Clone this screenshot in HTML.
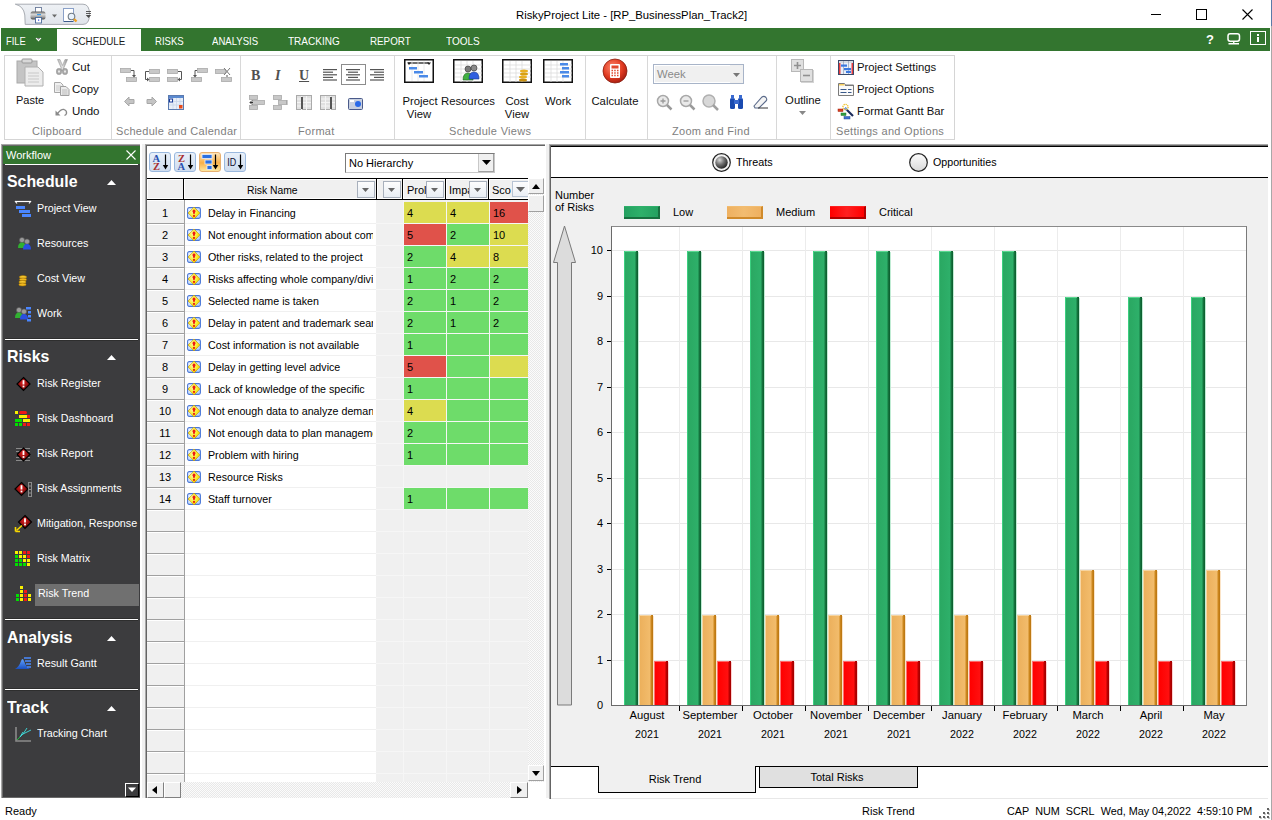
<!DOCTYPE html><html><head><meta charset="utf-8"><style>
html,body{margin:0;padding:0;}
body{width:1272px;height:820px;overflow:hidden;position:relative;background:#fff;font-family:"Liberation Sans",sans-serif;}
.t{position:absolute;white-space:nowrap;}
.b{position:absolute;box-sizing:border-box;}
svg.b{overflow:visible}
</style></head><body>
<svg class="b" style="left:14px;top:3px" width="80" height="24" viewBox="0 0 80 24"><defs><linearGradient id="qa" x1="0" y1="0" x2="0" y2="1"><stop offset="0" stop-color="#eef1f5"/><stop offset="1" stop-color="#e0e4ea"/></linearGradient><linearGradient id="pr" x1="0" y1="0" x2="0" y2="1"><stop offset="0" stop-color="#5a5a5a"/><stop offset="0.35" stop-color="#d8d8d8"/><stop offset="0.7" stop-color="#a0a0a0"/><stop offset="1" stop-color="#4a4a4a"/></linearGradient></defs><path d="M1.3 1.2 H69 Q75.5 1.2 75.5 11.3 Q75.5 21.4 69 21.4 H11.2 L10.8 12 Q9.5 3 1.3 1.2 Z" fill="url(#qa)" stroke="#a8acb2" stroke-width="1"/><rect x="21.5" y="4.5" width="6" height="5" fill="#fff" stroke="#6a7a9a" stroke-width="0.9"/><rect x="16.5" y="8.5" width="15" height="8" rx="2" fill="url(#pr)"/><rect x="23" y="11" width="4" height="1.2" fill="#3a9ae8"/><rect x="21.5" y="14.5" width="6" height="5.5" fill="#fff" stroke="#4a6a9a" stroke-width="0.9"/><rect x="24" y="16.5" width="1.2" height="1.2" fill="#2a4ae0"/><path d="M38 11.5h5l-2.5 3z" fill="#6a6a6a"/><rect x="49.5" y="5.5" width="10" height="13" fill="#fff" stroke="#8aa0c8" stroke-width="1"/><path d="M50 18.5h9" stroke="#3a5a8a" stroke-width="1"/><circle cx="57.5" cy="13.5" r="3.3" fill="#e8f2fc" stroke="#707a84" stroke-width="1.1"/><path d="M60 16l2.5 2.5" stroke="#f0a020" stroke-width="2.4"/><path d="M72 8.5h5M72 10.5h5" stroke="#4a4a4a" stroke-width="0.9"/><path d="M71.8 12h5.4l-2.7 3z" fill="#4a4a4a"/></svg>
<div class="t " style="left:516px;top:10px;font-size:11.3px;line-height:11.3px;color:#000;">RiskyProject Lite - [RP_BusinessPlan_Track2]</div>
<div class="b" style="left:1151px;top:14px;width:10px;height:1px;background:#000"></div>
<div class="b" style="left:1196px;top:9px;width:11px;height:11px;border:1px solid #000"></div>
<svg class="b" style="left:1242px;top:9px" width="11" height="11" viewBox="0 0 11 11"><path d="M0.5 0.5 L10.5 10.5 M10.5 0.5 L0.5 10.5" stroke="#000" stroke-width="1.1"/></svg>
<div class="b" style="left:1px;top:28px;width:1269px;height:23px;background:#33752f"></div>
<div class="t " style="left:6px;top:36px;font-size:11px;line-height:11px;color:#fff;transform:scaleX(0.85);transform-origin:0 0;">FILE</div>
<svg class="b" style="left:35px;top:37px" width="7" height="5" viewBox="0 0 7 5"><path d="M1 1 H6 L3.5 3.5Z" fill="#808080"/><path d="M1 1 L3.5 3.7 L6 1" fill="none" stroke="#fff" stroke-width="1.1"/></svg>
<div class="b" style="left:57px;top:29px;width:84px;height:22px;background:#fff"></div>
<div class="t " style="left:72px;top:36px;font-size:11px;line-height:11px;color:#1a1a1a;transform:scaleX(0.89);transform-origin:0 0;">SCHEDULE</div>
<div class="t " style="left:155px;top:36px;font-size:11px;line-height:11px;color:#fff;transform:scaleX(0.87);transform-origin:0 0;">RISKS</div>
<div class="t " style="left:212px;top:36px;font-size:11px;line-height:11px;color:#fff;transform:scaleX(0.87);transform-origin:0 0;">ANALYSIS</div>
<div class="t " style="left:288px;top:36px;font-size:11px;line-height:11px;color:#fff;transform:scaleX(0.91);transform-origin:0 0;">TRACKING</div>
<div class="t " style="left:370px;top:36px;font-size:11px;line-height:11px;color:#fff;transform:scaleX(0.89);transform-origin:0 0;">REPORT</div>
<div class="t " style="left:446px;top:36px;font-size:11px;line-height:11px;color:#fff;transform:scaleX(0.91);transform-origin:0 0;">TOOLS</div>
<div class="t " style="left:1206px;top:33px;font-size:13px;line-height:13px;color:#fff;font-weight:bold;">?</div>
<svg class="b" style="left:1227px;top:33px" width="14" height="12" viewBox="0 0 14 12"><rect x="1" y="0.8" width="11.5" height="7.5" rx="2.2" fill="none" stroke="#fff" stroke-width="1.5"/><path d="M6.75 8.5v2M1.5 10.8h10.5" stroke="#fff" stroke-width="1.4"/></svg>
<div class="b" style="left:1250px;top:31px;width:16px;height:14px;border:1.5px solid #fff"></div>
<div class="b" style="left:1257px;top:34px;width:2px;height:2px;background:#fff"></div>
<div class="b" style="left:1257px;top:37px;width:2px;height:5px;background:#fff"></div>
<div class="b" style="left:4px;top:55px;width:951px;height:85px;border:1px solid #d5d5d5;background:#fff"></div>
<div class="b" style="left:111px;top:56px;width:1px;height:83px;background:#d8d8d8"></div>
<div class="b" style="left:240px;top:56px;width:1px;height:83px;background:#d8d8d8"></div>
<div class="b" style="left:394px;top:56px;width:1px;height:83px;background:#d8d8d8"></div>
<div class="b" style="left:585px;top:56px;width:1px;height:83px;background:#d8d8d8"></div>
<div class="b" style="left:647px;top:56px;width:1px;height:83px;background:#d8d8d8"></div>
<div class="b" style="left:776px;top:56px;width:1px;height:83px;background:#d8d8d8"></div>
<div class="b" style="left:830px;top:56px;width:1px;height:83px;background:#d8d8d8"></div>
<div class="t " style="left:32px;top:126px;font-size:11px;line-height:11px;color:#808080;letter-spacing:0.3px;">Clipboard</div>
<div class="t " style="left:116px;top:126px;font-size:11px;line-height:11px;color:#808080;letter-spacing:0.3px;">Schedule and Calendar</div>
<div class="t " style="left:298px;top:126px;font-size:11px;line-height:11px;color:#808080;letter-spacing:0.3px;">Format</div>
<div class="t " style="left:449px;top:126px;font-size:11px;line-height:11px;color:#808080;letter-spacing:0.3px;">Schedule Views</div>
<div class="t " style="left:672px;top:126px;font-size:11px;line-height:11px;color:#808080;letter-spacing:0.3px;">Zoom and Find</div>
<div class="t " style="left:836px;top:126px;font-size:11px;line-height:11px;color:#808080;letter-spacing:0.3px;">Settings and Options</div>
<svg class="b" style="left:16px;top:58px" width="28" height="30" viewBox="0 0 28 30"><rect x="1" y="3" width="20" height="22" fill="#c4c4c4" stroke="#aaa"/><rect x="6" y="1" width="10" height="4" rx="1" fill="#d8d8d8" stroke="#999"/><path d="M9 9 H22 L27 14 V28 H9Z" fill="#ececec" stroke="#b0b0b0"/><path d="M12 15h11M12 18h11M12 21h11M12 24h11" stroke="#c8c8c8"/></svg>
<div class="t " style="left:16px;top:95px;font-size:11px;line-height:11px;color:#111;">Paste</div>
<svg class="b" style="left:56px;top:59px" width="12" height="16" viewBox="0 0 12 16"><defs><linearGradient id="sc" x1="0" y1="0" x2="1" y2="0"><stop offset="0" stop-color="#b8b8b8"/><stop offset="0.5" stop-color="#e0e0e0"/><stop offset="1" stop-color="#8a8a8a"/></linearGradient></defs><path d="M1.5 0.5h2.5l2.5 6l2.5-6h2.5l-3.5 8v3h-3v-3z" fill="url(#sc)" stroke="#9a9a9a" stroke-width="0.6"/><rect x="0.5" y="9.5" width="5" height="6" rx="2" fill="#a8a8a8" stroke="#909090" stroke-width="0.6"/><rect x="6.5" y="9.5" width="5" height="6" rx="2" fill="#a8a8a8" stroke="#909090" stroke-width="0.6"/><rect x="2" y="11.5" width="2" height="2" fill="#e8e8e8"/><rect x="8" y="11.5" width="2" height="2" fill="#e8e8e8"/></svg>
<div class="t " style="left:72px;top:62px;font-size:11.5px;line-height:11.5px;color:#111;">Cut</div>
<svg class="b" style="left:54px;top:82px" width="16" height="14" viewBox="0 0 16 14"><path d="M0.5 0.5h6l2.5 2.5v7.5h-8.5z" fill="#f0f0f0" stroke="#a8a8a8"/><path d="M2 4h5M2 6h5M2 8h4" stroke="#c0c0c0" stroke-width="0.8"/><path d="M6.5 4.5h5.5l3 3v6h-8.5z" fill="#ececec" stroke="#a0a0a0"/><path d="M8 8h5.5M8 10h5.5M8 12h5.5" stroke="#b0b0b0" stroke-width="0.8"/></svg>
<div class="t " style="left:72px;top:84px;font-size:11.5px;line-height:11.5px;color:#111;">Copy</div>
<svg class="b" style="left:55px;top:106px" width="13" height="10" viewBox="0 0 13 10"><path d="M0.5 9.5V4.5L5.5 9.5Z" fill="#8a8a8a"/><path d="M2.5 7.5Q6 3 9 3.5Q12 4.5 11.5 7.5Q11 9 9.5 9.5" fill="none" stroke="#8a8a8a" stroke-width="1.3"/></svg>
<div class="t " style="left:72px;top:106px;font-size:11.5px;line-height:11.5px;color:#111;">Undo</div>
<svg class="b" style="left:120px;top:68px" width="17" height="14" viewBox="0 0 17 14"><rect x="0.5" y="0.5" width="10" height="4" fill="#c8c8c8" stroke="#aaa" stroke-width="0.8"/><rect x="6.5" y="9.5" width="10" height="4" fill="#c8c8c8" stroke="#aaa" stroke-width="0.8"/><path d="M11 2.5h3v6" fill="none" stroke="#555" stroke-width="1"/><path d="M12 7h4l-2 2.5z" fill="#555"/></svg>
<svg class="b" style="left:144px;top:68px" width="17" height="14" viewBox="0 0 17 14"><rect x="5.5" y="1.5" width="10" height="4" fill="#c8c8c8" stroke="#aaa" stroke-width="0.8"/><rect x="5.5" y="9.5" width="10" height="4" fill="#c8c8c8" stroke="#aaa" stroke-width="0.8"/><path d="M5 3.5H1.5v8h3" fill="none" stroke="#555"/><path d="M3 9.5l2.5 2l-2.5 2z" fill="#555"/></svg>
<svg class="b" style="left:167px;top:68px" width="17" height="14" viewBox="0 0 17 14"><rect x="0.5" y="1.5" width="10" height="4" fill="#c8c8c8" stroke="#aaa" stroke-width="0.8"/><rect x="0.5" y="9.5" width="10" height="4" fill="#c8c8c8" stroke="#aaa" stroke-width="0.8"/><path d="M11 3.5h3.5v8H12" fill="none" stroke="#555"/><path d="M13 9.5l-2.5 2l2.5 2z" fill="#555"/></svg>
<svg class="b" style="left:191px;top:68px" width="17" height="14" viewBox="0 0 17 14"><rect x="6.5" y="0.5" width="10" height="4" fill="#c8c8c8" stroke="#aaa" stroke-width="0.8"/><rect x="0.5" y="9.5" width="10" height="4" fill="#c8c8c8" stroke="#aaa" stroke-width="0.8"/><path d="M6 2.5H4v6" fill="none" stroke="#555"/><path d="M2 7h4l-2 2.5z" fill="#555"/></svg>
<svg class="b" style="left:215px;top:68px" width="17" height="14" viewBox="0 0 17 14"><rect x="0.5" y="1.5" width="10" height="4" fill="#c8c8c8" stroke="#aaa" stroke-width="0.8"/><rect x="6.5" y="9.5" width="10" height="4" fill="#c8c8c8" stroke="#aaa" stroke-width="0.8"/><path d="M9 0l6 7M15 0l-6 7" stroke="#777"/><path d="M12 7v2" stroke="#555"/></svg>
<svg class="b" style="left:124px;top:96px" width="11" height="11" viewBox="0 0 11 11"><path d="M0.5 5.5 L5 1 V3.5 H10 V7.5 H5 V10z" fill="#c4c4c4" stroke="#a8a8a8"/></svg>
<svg class="b" style="left:146px;top:96px" width="11" height="11" viewBox="0 0 11 11"><path d="M10.5 5.5 L6 1 V3.5 H1 V7.5 H6 V10z" fill="#c4c4c4" stroke="#a8a8a8"/></svg>
<svg class="b" style="left:168px;top:95px" width="16" height="15" viewBox="0 0 16 15"><rect x="0.5" y="0.5" width="15" height="14" fill="#e8eef8" stroke="#5a7ab0"/><rect x="1" y="1" width="14" height="2" fill="#5a8ad0"/><path d="M1 6.5h14M1 10h14M5 3v11M8.5 3v11M12 3v11" stroke="#c8d4e8" stroke-width="0.8"/><rect x="1.5" y="4" width="3" height="3" fill="#fff" stroke="#1a3a9a"/><rect x="11" y="10" width="3.5" height="3.5" fill="#e84a1a"/></svg>
<div class="t " style="left:251px;top:68px;font-size:14px;line-height:14px;color:#505050;"><span style="font-family:Liberation Serif;font-weight:bold">B</span></div>
<div class="t " style="left:275px;top:68px;font-size:14px;line-height:14px;color:#505050;"><span style="font-family:Liberation Serif;font-style:italic;font-weight:bold">I</span></div>
<div class="t " style="left:299px;top:68px;font-size:14px;line-height:14px;color:#505050;"><span style="font-family:Liberation Serif;font-weight:bold;text-decoration:underline">U</span></div>
<svg class="b" style="left:323px;top:69px" width="14" height="12" viewBox="0 0 14 12"><rect x="0" y="0.0" width="14" height="1.2" fill="#555"/><rect x="0" y="2.6" width="10" height="1.2" fill="#555"/><rect x="0" y="5.2" width="14" height="1.2" fill="#555"/><rect x="0" y="7.8" width="10" height="1.2" fill="#555"/><rect x="0" y="10.4" width="14" height="1.2" fill="#555"/></svg>
<div class="b" style="left:341px;top:64px;width:25px;height:21px;border:1px solid #8c8c8c"></div>
<svg class="b" style="left:346px;top:69px" width="14" height="12" viewBox="0 0 14 12"><rect x="0.0" y="0.0" width="14" height="1.2" fill="#555"/><rect x="2.0" y="2.6" width="10" height="1.2" fill="#555"/><rect x="0.0" y="5.2" width="14" height="1.2" fill="#555"/><rect x="2.0" y="7.8" width="10" height="1.2" fill="#555"/><rect x="0.0" y="10.4" width="14" height="1.2" fill="#555"/></svg>
<svg class="b" style="left:370px;top:69px" width="14" height="12" viewBox="0 0 14 12"><rect x="0" y="0.0" width="14" height="1.2" fill="#555"/><rect x="4" y="2.6" width="10" height="1.2" fill="#555"/><rect x="0" y="5.2" width="14" height="1.2" fill="#555"/><rect x="4" y="7.8" width="10" height="1.2" fill="#555"/><rect x="0" y="10.4" width="14" height="1.2" fill="#555"/></svg>
<svg class="b" style="left:249px;top:95px" width="16" height="15" viewBox="0 0 16 15"><rect x="0.5" y="0.5" width="8" height="4" fill="#c8c8c8" stroke="#aaa" stroke-width="0.8"/><rect x="3.5" y="5.5" width="12" height="4" fill="#c8c8c8" stroke="#aaa" stroke-width="0.8"/><rect x="0.5" y="10.5" width="8" height="4" fill="#c8c8c8" stroke="#aaa" stroke-width="0.8"/><path d="M1 7.5h3M1 7.5l2-2M1 7.5l2 2" stroke="#333"/></svg>
<svg class="b" style="left:273px;top:95px" width="16" height="15" viewBox="0 0 16 15"><rect x="0.5" y="0.5" width="8" height="4" fill="#c8c8c8" stroke="#aaa" stroke-width="0.8"/><rect x="5.5" y="5.5" width="8" height="4" fill="#c8c8c8" stroke="#aaa" stroke-width="0.8"/><rect x="0.5" y="10.5" width="8" height="4" fill="#c8c8c8" stroke="#aaa" stroke-width="0.8"/><path d="M14 5v5" stroke="#999"/></svg>
<svg class="b" style="left:296px;top:95px" width="17" height="15" viewBox="0 0 17 15"><rect x="0.5" y="0.5" width="15" height="14" fill="#e0e0e0" stroke="#aaa"/><path d="M1 4h14M1 7.5h14M1 11h14M5.5 1v14M10.5 1v14" stroke="#f4f4f4"/><rect x="5" y="2" width="2" height="12" fill="#555"/></svg>
<svg class="b" style="left:320px;top:95px" width="17" height="15" viewBox="0 0 17 15"><rect x="0.5" y="0.5" width="15" height="14" fill="#e0e0e0" stroke="#aaa"/><path d="M1 4h14M1 7.5h14M1 11h14M5.5 1v14M10.5 1v14" stroke="#f4f4f4"/><rect x="10" y="2" width="2" height="12" fill="#555"/></svg>
<svg class="b" style="left:348px;top:97px" width="15" height="13" viewBox="0 0 15 13"><rect x="0.5" y="1.5" width="14" height="11" rx="1" fill="#c8d0e0" stroke="#4a5a8a"/><rect x="2" y="3" width="4" height="2" fill="#fff"/><circle cx="10" cy="7" r="3" fill="#2a6ae8"/></svg>
<svg class="b" style="left:404px;top:59px" width="30" height="24" viewBox="0 0 30 24"><rect x="0.75" y="0.75" width="28.5" height="22.5" fill="#fff" stroke="#111" stroke-width="1.5"/><path d="M4 4h21" stroke="#222" stroke-width="1.3"/><path d="M3 3.5l2 2.5l2-2.5zM23 3.5l2 2.5l2-2.5z" fill="#222"/><path d="M8 2v20M14 2v20M20 2v20" stroke="#e4e4e4" stroke-width="0.8"/><rect x="5" y="8" width="8" height="2.5" fill="#4a8ae8"/><rect x="10" y="12" width="9" height="2.5" fill="#4a8ae8"/><rect x="15" y="16" width="9" height="2.5" fill="#4a8ae8"/></svg>
<svg class="b" style="left:453px;top:59px" width="30" height="24" viewBox="0 0 30 24"><rect x="0.75" y="0.75" width="28.5" height="22.5" fill="#fff" stroke="#111" stroke-width="1.5"/><path d="M2 6h27M2 10h27M2 14h27M2 18h27M8 2v21M14 2v21M20 2v21" stroke="#dcdcdc" stroke-width="0.8"/><circle cx="15" cy="10" r="3" fill="#7a7a7a" stroke="#333" stroke-width="0.6"/><circle cx="21" cy="9" r="3" fill="#8a8a8a" stroke="#333" stroke-width="0.6"/><path d="M10 21 Q10 14 15 14 Q20 14 20 21Z" fill="#40b040" stroke="#206020" stroke-width="0.6"/><path d="M16 20 Q16 13 21 13 Q26 13 26 20Z" fill="#3060e0" stroke="#1a3a90" stroke-width="0.6"/></svg>
<svg class="b" style="left:502px;top:59px" width="30" height="24" viewBox="0 0 30 24"><rect x="0.75" y="0.75" width="28.5" height="22.5" fill="#fff" stroke="#111" stroke-width="1.5"/><path d="M2 6h27M2 10h27M2 14h27M2 18h27M8 2v21M14 2v21M20 2v21" stroke="#dcdcdc" stroke-width="0.8"/><ellipse cx="22" cy="12" rx="4" ry="1.5" fill="#e8b020"/><ellipse cx="22" cy="15" rx="4" ry="1.5" fill="#d8a010"/><ellipse cx="21" cy="18" rx="4" ry="1.5" fill="#e8b020"/><ellipse cx="21" cy="21" rx="4" ry="1.5" fill="#c89010"/></svg>
<svg class="b" style="left:543px;top:59px" width="30" height="24" viewBox="0 0 30 24"><rect x="0.75" y="0.75" width="28.5" height="22.5" fill="#fff" stroke="#111" stroke-width="1.5"/><path d="M2 6h27M2 10h27M2 14h27M2 18h27M8 2v21M14 2v21M20 2v21" stroke="#dcdcdc" stroke-width="0.8"/><rect x="17" y="4" width="8" height="2.5" fill="#4a8ae8"/><rect x="19" y="8" width="7" height="2.5" fill="#4a8ae8"/><rect x="17" y="12" width="9" height="2.5" fill="#4a8ae8"/><rect x="19" y="16" width="7" height="2.5" fill="#4a8ae8"/></svg>
<div class="t" style="left:270px;width:300px;text-align:center;top:96px;font-size:11.3px;line-height:11.3px;color:#111;">Project</div>
<div class="t" style="left:269px;width:300px;text-align:center;top:109px;font-size:11.3px;line-height:11.3px;color:#111;">View</div>
<div class="t" style="left:318px;width:300px;text-align:center;top:96px;font-size:11.3px;line-height:11.3px;color:#111;">Resources</div>
<div class="t" style="left:367px;width:300px;text-align:center;top:96px;font-size:11.3px;line-height:11.3px;color:#111;">Cost</div>
<div class="t" style="left:367px;width:300px;text-align:center;top:109px;font-size:11.3px;line-height:11.3px;color:#111;">View</div>
<div class="t" style="left:408px;width:300px;text-align:center;top:96px;font-size:11.3px;line-height:11.3px;color:#111;">Work</div>
<svg class="b" style="left:602px;top:58px" width="26" height="26" viewBox="0 0 26 26"><defs><radialGradient id="cg" cx="0.4" cy="0.35" r="0.7"><stop offset="0" stop-color="#ff8a70"/><stop offset="0.6" stop-color="#e03a20"/><stop offset="1" stop-color="#a01a10"/></radialGradient></defs><circle cx="13" cy="13" r="12" fill="url(#cg)" stroke="#8a2010" stroke-width="0.8"/><rect x="8" y="6" width="10" height="14" rx="1" fill="#fff"/><rect x="9.5" y="7.5" width="7" height="3" fill="#e04a30"/><path d="M9.5 12.5h1.5M12.2 12.5h1.5M15 12.5h1.5M9.5 15h1.5M12.2 15h1.5M15 15h1.5M9.5 17.5h1.5M12.2 17.5h1.5M15 17.5h1.5" stroke="#e04a30" stroke-width="1.5"/></svg>
<div class="t" style="left:465px;width:300px;text-align:center;top:96px;font-size:11.3px;line-height:11.3px;color:#111;">Calculate</div>
<div class="b" style="left:653px;top:64px;width:91px;height:20px;border:1px solid #a8b4c8;background:#fff"></div>
<div class="b" style="left:655px;top:66px;width:75px;height:16px;background:#f0f0f0"></div>
<div class="b" style="left:730px;top:65px;width:13px;height:18px;background:#f0f0f0"></div>
<div class="t " style="left:657px;top:69px;font-size:11.3px;line-height:11.3px;color:#8a8a8a;">Week</div>
<svg class="b" style="left:733px;top:73px" width="7" height="4" viewBox="0 0 7 4"><path d="M0 0h7l-3.5 4z" fill="#777"/></svg>
<svg class="b" style="left:656px;top:94px" width="17" height="16" viewBox="0 0 17 16"><circle cx="7" cy="7" r="5.5" fill="#eaeaea" stroke="#a8a8a8" stroke-width="1.5"/><path d="M11 11l4.5 4.5" stroke="#9a9a9a" stroke-width="2.5"/><path d="M4.5 7h5M7 4.5v5" stroke="#999" stroke-width="1.3"/></svg>
<svg class="b" style="left:679px;top:94px" width="17" height="16" viewBox="0 0 17 16"><circle cx="7" cy="7" r="5.5" fill="#eaeaea" stroke="#a8a8a8" stroke-width="1.5"/><path d="M11 11l4.5 4.5" stroke="#9a9a9a" stroke-width="2.5"/><path d="M4.5 7h5" stroke="#999" stroke-width="1.3"/></svg>
<svg class="b" style="left:702px;top:94px" width="18" height="16" viewBox="0 0 18 16"><circle cx="7" cy="7" r="6" fill="#d8d8d8" stroke="#b0b0b0" stroke-width="1.5"/><path d="M11 11l5 5" stroke="#a0a0a0" stroke-width="2.5"/></svg>
<svg class="b" style="left:728px;top:95px" width="17" height="15" viewBox="0 0 17 15"><rect x="2" y="3" width="5" height="11" rx="1.5" fill="#1a4ab0"/><rect x="10" y="3" width="5" height="11" rx="1.5" fill="#1a4ab0"/><rect x="6" y="5" width="5" height="4" fill="#3a6ad0"/><rect x="3" y="0" width="3" height="4" fill="#3a6ad0"/><rect x="11" y="0" width="3" height="4" fill="#3a6ad0"/></svg>
<svg class="b" style="left:752px;top:95px" width="17" height="15" viewBox="0 0 17 15"><path d="M2 11 L10 2 Q12 0.5 14 2.5 Q15.5 4.5 14 6 L7 13 H3 Z" fill="#f4f4f4" stroke="#5a6a8a" stroke-width="1.1"/><path d="M6 13h10" stroke="#333"/></svg>
<svg class="b" style="left:790px;top:58px" width="26" height="27" viewBox="0 0 26 27"><rect x="2" y="2" width="12" height="12" fill="#d0d0d0"/><rect x="1.5" y="1.5" width="12" height="12" fill="#e0e0e0" stroke="#b8b8b8"/><path d="M4 7.5h7M7.5 4v7" stroke="#909090" stroke-width="1.6"/><rect x="11" y="12" width="13" height="13" fill="#d4d4d4"/><rect x="10.5" y="11.5" width="12" height="12" fill="#e0e0e0" stroke="#b8b8b8"/><path d="M13 17.5h7" stroke="#909090" stroke-width="1.6"/></svg>
<div class="t" style="left:653px;width:300px;text-align:center;top:95px;font-size:11.3px;line-height:11.3px;color:#111;">Outline</div>
<svg class="b" style="left:799px;top:111px" width="7" height="4" viewBox="0 0 7 4"><path d="M0 0h7l-3.5 4z" fill="#888"/></svg>
<svg class="b" style="left:838px;top:60px" width="16" height="15" viewBox="0 0 16 15"><rect x="0.5" y="0.5" width="15" height="14" fill="#e8f0fa" stroke="#3a4a6a"/><rect x="1" y="1" width="14" height="2" fill="#d8dce4"/><path d="M5.5 1v13M10.5 1v13" stroke="#9aa8c0" stroke-width="0.8"/><rect x="1.2" y="3" width="1.2" height="11" fill="#e81010"/><rect x="13.6" y="3" width="1.2" height="11" fill="#e81010"/><rect x="3" y="4.5" width="6" height="2.2" fill="#3a78e0"/><rect x="6" y="8" width="7" height="2.2" fill="#3a78e0"/><rect x="8" y="11" width="5" height="2" fill="#3a78e0"/></svg>
<div class="t " style="left:857px;top:62px;font-size:11.3px;line-height:11.3px;color:#111;">Project Settings</div>
<svg class="b" style="left:838px;top:82px" width="16" height="14" viewBox="0 0 16 14"><path d="M0.5 1.5h6l1 1.5h8v10.5h-15z" fill="#fafafa" stroke="#7a7a7a"/><rect x="1" y="2" width="5.5" height="1.5" fill="#f8d060"/><path d="M7 3.5h8.5" stroke="#7a7a7a"/><path d="M2.5 7.5h6M10 7.5h3.5M2.5 10.5h6M10 10.5h3.5" stroke="#3a5a8a" stroke-width="1"/></svg>
<div class="t " style="left:857px;top:84px;font-size:11.3px;line-height:11.3px;color:#111;">Project Options</div>
<svg class="b" style="left:837px;top:103px" width="18" height="17" viewBox="0 0 18 17"><rect x="1" y="6" width="5" height="2.5" fill="#d84020" stroke="#a02010" stroke-width="0.5"/><rect x="4" y="10" width="5" height="2.5" fill="#30a040" stroke="#207030" stroke-width="0.5"/><rect x="7" y="13.5" width="6" height="2.5" fill="#4070d0" stroke="#2050a0" stroke-width="0.5"/><path d="M8 5L16 13" stroke="#1a2a5a" stroke-width="2.2"/><path d="M8 5L10 7" stroke="#6aa0ff" stroke-width="2"/><circle cx="8.5" cy="4" r="2.6" fill="none" stroke="#f0c020" stroke-width="1.3" stroke-dasharray="1.2 0.8"/></svg>
<div class="t " style="left:857px;top:106px;font-size:11.3px;line-height:11.3px;color:#111;">Format Gantt Bar</div>
<div class="b" style="left:0px;top:140px;width:1272px;height:658px;background:#fff"></div>
<div class="b" style="left:142px;top:144px;width:3px;height:654px;background:#f0f0f0"></div>
<div class="b" style="left:546px;top:144px;width:3px;height:654px;background:#f0f0f0"></div>
<div class="b" style="left:1px;top:144px;width:139px;height:654px;background:#a8a8a8"></div>
<div class="b" style="left:2px;top:145px;width:138px;height:653px;background:#6a6a6a"></div>
<div class="b" style="left:3px;top:146px;width:137px;height:651px;background:#3c3c3e"></div>
<div class="b" style="left:3px;top:146px;width:137px;height:18px;background:#33752f"></div>
<div class="t " style="left:6px;top:150px;font-size:11px;line-height:11px;color:#fff;">Workflow</div>
<svg class="b" style="left:126px;top:150px" width="10" height="10" viewBox="0 0 10 10"><path d="M0.5 0.5L9.5 9.5M9.5 0.5L0.5 9.5" stroke="#fff" stroke-width="1.1"/></svg>
<div class="b" style="left:5px;top:164px;width:133px;height:1px;background:#fff"></div>
<div class="t " style="left:7px;top:173px;font-size:16.2px;line-height:16.2px;color:#fff;font-weight:bold;transform:scaleX(0.98);transform-origin:0 0;">Schedule</div>
<svg class="b" style="left:107px;top:180px" width="9" height="5" viewBox="0 0 9 5"><path d="M0 5 L4.5 0 L9 5Z" fill="#fff"/></svg>
<div class="t " style="left:37px;top:203px;font-size:11px;line-height:11px;color:#fff;transform:scaleX(0.975);transform-origin:0 0;">Project View</div>
<svg class="b" style="left:14px;top:200px" width="18" height="17" viewBox="0 0 18 17"><path d="M1.5 1.5h15" stroke="#fff" stroke-width="1.2"/><path d="M1 1l2 2.5M17 1l-2 2.5" stroke="#fff" stroke-width="1.2"/><rect x="2" y="6" width="9" height="3" fill="#4a86ff"/><rect x="5" y="10" width="11" height="3" fill="#4a86ff"/><rect x="8" y="14" width="9" height="3" fill="#4a86ff"/></svg>
<div class="t " style="left:37px;top:238px;font-size:11px;line-height:11px;color:#fff;transform:scaleX(0.975);transform-origin:0 0;">Resources</div>
<svg class="b" style="left:14px;top:235px" width="18" height="17" viewBox="0 0 18 17"><circle cx="8" cy="5" r="2.6" fill="#9a9a9a" stroke="#555" stroke-width="0.6"/><path d="M4 13 Q4 7.5 8 7.5 Q12 7.5 12 13Z" fill="#30b030"/><circle cx="13" cy="6.5" r="2.6" fill="#9a9a9a" stroke="#555" stroke-width="0.6"/><path d="M9 14.5 Q9 9.0 13 9.0 Q17 9.0 17 14.5Z" fill="#2a50e0"/></svg>
<div class="t " style="left:37px;top:273px;font-size:11px;line-height:11px;color:#fff;transform:scaleX(0.975);transform-origin:0 0;">Cost View</div>
<svg class="b" style="left:14px;top:270px" width="18" height="17" viewBox="0 0 18 17"><ellipse cx="9" cy="7" rx="3.6" ry="1.5" fill="#f8c830" stroke="#a07000" stroke-width="0.6"/><ellipse cx="9" cy="9.5" rx="3.6" ry="1.5" fill="#f0b820" stroke="#a07000" stroke-width="0.6"/><ellipse cx="8.5" cy="12" rx="3.6" ry="1.5" fill="#f8c830" stroke="#a07000" stroke-width="0.6"/><ellipse cx="8.5" cy="14.5" rx="3.6" ry="1.5" fill="#f0b820" stroke="#a07000" stroke-width="0.6"/></svg>
<div class="t " style="left:37px;top:308px;font-size:11px;line-height:11px;color:#fff;transform:scaleX(0.975);transform-origin:0 0;">Work</div>
<svg class="b" style="left:14px;top:305px" width="18" height="17" viewBox="0 0 18 17"><circle cx="5" cy="5" r="2.6" fill="#9a9a9a" stroke="#555" stroke-width="0.6"/><path d="M1 13 Q1 7.5 5 7.5 Q9 7.5 9 13Z" fill="#30b030"/><circle cx="10" cy="6.5" r="2.6" fill="#9a9a9a" stroke="#555" stroke-width="0.6"/><path d="M6 14.5 Q6 9.0 10 9.0 Q14 9.0 14 14.5Z" fill="#2a50e0"/><rect x="12" y="2" width="5" height="2.5" fill="#4a86ff"/><rect x="14" y="6" width="3" height="2.5" fill="#4a86ff"/><rect x="14" y="10" width="3" height="2.5" fill="#4a86ff"/><rect x="13" y="14" width="4" height="2.5" fill="#4a86ff"/></svg>
<div class="b" style="left:5px;top:338px;width:133px;height:3px;background:#2e2e2e"></div>
<div class="b" style="left:5px;top:339px;width:133px;height:1px;background:#fff"></div>
<div class="t " style="left:7px;top:348px;font-size:16.2px;line-height:16.2px;color:#fff;font-weight:bold;transform:scaleX(0.98);transform-origin:0 0;">Risks</div>
<svg class="b" style="left:107px;top:355px" width="9" height="5" viewBox="0 0 9 5"><path d="M0 5 L4.5 0 L9 5Z" fill="#fff"/></svg>
<div class="t " style="left:37px;top:378px;font-size:11px;line-height:11px;color:#fff;transform:scaleX(0.975);transform-origin:0 0;">Risk Register</div>
<svg class="b" style="left:14px;top:375px" width="18" height="17" viewBox="0 0 18 17"><defs><radialGradient id="dg" cx="0.45" cy="0.4" r="0.6"><stop offset="0" stop-color="#e02020"/><stop offset="1" stop-color="#600000"/></radialGradient></defs><path d="M9.5 2.5 L16.0 9 L9.5 15.5 L3.0 9Z" fill="url(#dg)" stroke="#000" stroke-width="1.2"/><path d="M9.5 5.2v4.3" stroke="#fff" stroke-width="1.8"/><rect x="8.6" y="10.6" width="1.8" height="1.8" fill="#fff"/></svg>
<div class="t " style="left:37px;top:413px;font-size:11px;line-height:11px;color:#fff;transform:scaleX(0.975);transform-origin:0 0;">Risk Dashboard</div>
<svg class="b" style="left:14px;top:410px" width="18" height="17" viewBox="0 0 18 17"><rect x="1" y="1" width="3" height="3" fill="#f8f000"/><rect x="5" y="1" width="8" height="3" rx="1.5" fill="#f01818"/><rect x="5" y="5" width="8" height="3" fill="#f8f000"/><rect x="13" y="5" width="3" height="3" fill="#f01818"/><rect x="1" y="9" width="7" height="3" fill="#00e000"/><rect x="9" y="9" width="7" height="3" fill="#f8f000"/><rect x="1" y="13" width="3" height="3" fill="#00e000"/><rect x="5" y="13" width="3" height="3" fill="#00e000"/><rect x="9" y="13" width="3" height="3" fill="#f01818"/><rect x="13" y="13" width="3" height="3" fill="#f01818"/></svg>
<div class="t " style="left:37px;top:448px;font-size:11px;line-height:11px;color:#fff;transform:scaleX(0.975);transform-origin:0 0;">Risk Report</div>
<svg class="b" style="left:14px;top:445px" width="18" height="17" viewBox="0 0 18 17"><path d="M2 3.5h14M2 6.5h14M2 9.5h14M2 12.5h14M2 15.5h14" stroke="#8a8a8a" stroke-width="1"/><defs><radialGradient id="dg" cx="0.45" cy="0.4" r="0.6"><stop offset="0" stop-color="#e02020"/><stop offset="1" stop-color="#600000"/></radialGradient></defs><path d="M9.5 3.0 L16.0 9.5 L9.5 16.0 L3.0 9.5Z" fill="url(#dg)" stroke="#000" stroke-width="1.2"/><path d="M9.5 5.7v4.3" stroke="#fff" stroke-width="1.8"/><rect x="8.6" y="11.1" width="1.8" height="1.8" fill="#fff"/></svg>
<div class="t " style="left:37px;top:483px;font-size:11px;line-height:11px;color:#fff;transform:scaleX(0.975);transform-origin:0 0;">Risk Assignments</div>
<svg class="b" style="left:14px;top:480px" width="18" height="17" viewBox="0 0 18 17"><defs><radialGradient id="dg" cx="0.45" cy="0.4" r="0.6"><stop offset="0" stop-color="#e02020"/><stop offset="1" stop-color="#600000"/></radialGradient></defs><path d="M7.5 2.5 L14.0 9 L7.5 15.5 L1.0 9Z" fill="url(#dg)" stroke="#000" stroke-width="1.2"/><path d="M7.5 5.2v4.3" stroke="#fff" stroke-width="1.8"/><rect x="6.6" y="10.6" width="1.8" height="1.8" fill="#fff"/><rect x="14.5" y="2.5" width="3" height="14" fill="none" stroke="#8a8a8a"/><path d="M14.5 6h3M14.5 9.5h3M14.5 13h3" stroke="#8a8a8a"/></svg>
<div class="t " style="left:37px;top:518px;font-size:11px;line-height:11px;color:#fff;transform:scaleX(0.975);transform-origin:0 0;">Mitigation, Response</div>
<svg class="b" style="left:14px;top:515px" width="18" height="17" viewBox="0 0 18 17"><defs><radialGradient id="dg" cx="0.45" cy="0.4" r="0.6"><stop offset="0" stop-color="#e02020"/><stop offset="1" stop-color="#600000"/></radialGradient></defs><path d="M11 0.5 L17.5 7 L11 13.5 L4.5 7Z" fill="url(#dg)" stroke="#000" stroke-width="1.2"/><path d="M11 3.2v4.3" stroke="#fff" stroke-width="1.8"/><rect x="10.1" y="8.6" width="1.8" height="1.8" fill="#fff"/><path d="M2.5 15.5L8 10.5" stroke="#f8d800" stroke-width="1.6"/><path d="M1.5 16.5h4.5M1.5 16.5v-4.5" stroke="#f8d800" stroke-width="1.6"/></svg>
<div class="t " style="left:37px;top:553px;font-size:11px;line-height:11px;color:#fff;transform:scaleX(0.975);transform-origin:0 0;">Risk Matrix</div>
<svg class="b" style="left:14px;top:550px" width="18" height="17" viewBox="0 0 18 17"><rect x="1" y="1" width="3" height="3" fill="#f8f000"/><rect x="5" y="1" width="3" height="3" fill="#f8f000"/><rect x="9" y="1" width="3" height="3" fill="#f01818"/><rect x="13" y="1" width="3" height="3" fill="#f01818"/><rect x="1" y="5" width="3" height="3" fill="#00e000"/><rect x="5" y="5" width="3" height="3" fill="#f8f000"/><rect x="9" y="5" width="3" height="3" fill="#f8f000"/><rect x="13" y="5" width="3" height="3" fill="#f01818"/><rect x="1" y="9" width="3" height="3" fill="#00e000"/><rect x="5" y="9" width="3" height="3" fill="#00e000"/><rect x="9" y="9" width="3" height="3" fill="#f8f000"/><rect x="13" y="9" width="3" height="3" fill="#f8f000"/><rect x="1" y="13" width="3" height="3" fill="#00e000"/><rect x="5" y="13" width="3" height="3" fill="#00e000"/><rect x="9" y="13" width="3" height="3" fill="#00e000"/><rect x="13" y="13" width="3" height="3" fill="#f8f000"/></svg>
<div class="b" style="left:35px;top:584px;width:104px;height:22px;background:#707070"></div>
<div class="t " style="left:38px;top:588px;font-size:11px;line-height:11px;color:#fff;transform:scaleX(0.975);transform-origin:0 0;">Risk Trend</div>
<svg class="b" style="left:14px;top:585px" width="18" height="17" viewBox="0 0 18 17"><rect x="6" y="1" width="3" height="3" fill="#f8f000"/><rect x="6" y="5" width="3" height="3" fill="#f8f000"/><rect x="10" y="5" width="3" height="3" fill="#f01818"/><rect x="2" y="9" width="3" height="3" fill="#00e000"/><rect x="6" y="9" width="3" height="3" fill="#f8f000"/><rect x="10" y="9" width="3" height="3" fill="#f01818"/><rect x="14" y="9" width="3" height="3" fill="#f8f000"/><rect x="2" y="13" width="3" height="3" fill="#00e000"/><rect x="6" y="13" width="3" height="3" fill="#f8f000"/><rect x="10" y="13" width="3" height="3" fill="#f01818"/><rect x="14" y="13" width="3" height="3" fill="#f8f000"/></svg>
<div class="b" style="left:5px;top:618px;width:133px;height:3px;background:#2e2e2e"></div>
<div class="b" style="left:5px;top:619px;width:133px;height:1px;background:#fff"></div>
<div class="t " style="left:7px;top:629px;font-size:16.2px;line-height:16.2px;color:#fff;font-weight:bold;transform:scaleX(0.98);transform-origin:0 0;">Analysis</div>
<svg class="b" style="left:107px;top:636px" width="9" height="5" viewBox="0 0 9 5"><path d="M0 5 L4.5 0 L9 5Z" fill="#fff"/></svg>
<div class="t " style="left:37px;top:658px;font-size:11px;line-height:11px;color:#fff;transform:scaleX(0.975);transform-origin:0 0;">Result Gantt</div>
<svg class="b" style="left:14px;top:655px" width="18" height="17" viewBox="0 0 18 17"><defs><linearGradient id="gg" x1="0" y1="0" x2="0" y2="1"><stop offset="0" stop-color="#60a0ff"/><stop offset="1" stop-color="#1a50c0"/></linearGradient></defs><path d="M1 14 Q5 12 7 6 Q8.5 2 10 6 Q12 12 16 14Z" fill="url(#gg)"/><path d="M10 3h7M11 6h6M12 9h5M13 12h4" stroke="#4a8aff" stroke-width="1.5"/></svg>
<div class="b" style="left:5px;top:688px;width:133px;height:3px;background:#2e2e2e"></div>
<div class="b" style="left:5px;top:689px;width:133px;height:1px;background:#fff"></div>
<div class="t " style="left:7px;top:699px;font-size:16.2px;line-height:16.2px;color:#fff;font-weight:bold;transform:scaleX(0.98);transform-origin:0 0;">Track</div>
<svg class="b" style="left:107px;top:706px" width="9" height="5" viewBox="0 0 9 5"><path d="M0 5 L4.5 0 L9 5Z" fill="#fff"/></svg>
<div class="t " style="left:37px;top:728px;font-size:11px;line-height:11px;color:#fff;transform:scaleX(0.975);transform-origin:0 0;">Tracking Chart</div>
<svg class="b" style="left:14px;top:725px" width="18" height="17" viewBox="0 0 18 17"><path d="M2 2v14h15" fill="none" stroke="#8a8a8a" stroke-width="1.6"/><path d="M3 15L9 9M9 9l8-4M9 9l4-6M6 12l3-5" stroke="#40e0e0" stroke-width="0.9"/><path d="M3 15L6 12" stroke="#20c040" stroke-width="1"/></svg>
<div class="b" style="left:125px;top:783px;width:14px;height:14px;border-top:1px solid #fff;border-left:1px solid #fff;border-right:1px solid #000;border-bottom:1px solid #000"></div>
<svg class="b" style="left:127px;top:787px" width="10" height="6" viewBox="0 0 10 6"><path d="M1 0.5h8L5 5z" fill="#fff"/></svg>
<div class="b" style="left:145px;top:144px;width:400px;height:654px;background:#a8a8a8"></div>
<div class="b" style="left:146px;top:145px;width:399px;height:653px;background:#646464"></div>
<div class="b" style="left:147px;top:146px;width:398px;height:652px;background:#fff"></div>
<div class="b" style="left:149px;top:152px;width:22px;height:20px;background:linear-gradient(#e8f0fa,#cfdcee);border:1px solid #9ab8de;border-radius:3px"></div>
<svg class="b" style="left:149px;top:152px" width="22" height="20" viewBox="0 0 22 20"><text x="3.5" y="9.5" font-family="Liberation Serif" font-weight="bold" font-size="10.5" fill="#2a50b0">A</text><text x="4" y="18" font-family="Liberation Serif" font-weight="bold" font-size="10.5" fill="#a83030">Z</text><path d="M16.5 2.5v12" stroke="#000" stroke-width="1.2"/><path d="M13.8 13h5.4l-2.7 4.5z" fill="#000"/></svg>
<div class="b" style="left:174px;top:152px;width:22px;height:20px;background:linear-gradient(#e8f0fa,#cfdcee);border:1px solid #9ab8de;border-radius:3px"></div>
<svg class="b" style="left:174px;top:152px" width="22" height="20" viewBox="0 0 22 20"><text x="4" y="9.5" font-family="Liberation Serif" font-weight="bold" font-size="10.5" fill="#a83030">Z</text><text x="3.5" y="18" font-family="Liberation Serif" font-weight="bold" font-size="10.5" fill="#2a50b0">A</text><path d="M16.5 2.5v12" stroke="#000" stroke-width="1.2"/><path d="M13.8 13h5.4l-2.7 4.5z" fill="#000"/></svg>
<div class="b" style="left:199px;top:152px;width:22px;height:20px;background:linear-gradient(#fde4b8,#f8b048 55%,#fde8a0);border:1px solid #e8b070;border-radius:3px"></div>
<svg class="b" style="left:199px;top:152px" width="22" height="20" viewBox="0 0 22 20"><rect x="3" y="2.5" width="10" height="4" fill="#2a70e0" stroke="#e8f0ff" stroke-width="0.8"/><rect x="6" y="8" width="7" height="4" fill="#2a70e0" stroke="#e8f0ff" stroke-width="0.8"/><rect x="8" y="13.5" width="5" height="4" fill="#2a70e0" stroke="#e8f0ff" stroke-width="0.8"/><path d="M16.5 2.5v12" stroke="#000" stroke-width="1.2"/><path d="M13.8 13h5.4l-2.7 4.5z" fill="#000"/></svg>
<div class="b" style="left:224px;top:152px;width:22px;height:20px;background:linear-gradient(#e8f0fa,#cfdcee);border:1px solid #9ab8de;border-radius:3px"></div>
<svg class="b" style="left:224px;top:152px" width="22" height="20" viewBox="0 0 22 20"><text x="3.5" y="14" font-family="Liberation Sans" font-size="10" fill="#101030" transform="scale(0.9,1)">ID</text><path d="M16.5 2.5v12" stroke="#000" stroke-width="1.2"/><path d="M13.8 13h5.4l-2.7 4.5z" fill="#000"/></svg>
<div class="b" style="left:345px;top:153px;width:150px;height:20px;border:1px solid #7a7a7a;border-right-color:#c8c8c8;border-bottom-color:#c8c8c8;background:#fff"></div>
<div class="b" style="left:478px;top:154px;width:16px;height:18px;background:#f0f0f0;border-left:1px solid #c8c8c8;border-bottom:1px solid #a0a0a0;border-right:1px solid #a0a0a0"></div>
<svg class="b" style="left:482px;top:160px" width="9" height="5" viewBox="0 0 9 5"><path d="M0 0h9L4.5 5z" fill="#000"/></svg>
<div class="t " style="left:349px;top:158px;font-size:11px;line-height:11px;color:#000;">No Hierarchy</div>
<div class="b" style="left:147px;top:178px;width:381px;height:22px;background:#000"></div>
<div class="b" style="left:147px;top:179px;width:36px;height:20px;background:#f0f0f0;border-top:1px solid #fff;border-left:1px solid #fff;border-bottom:1px solid #fff"></div>
<div class="b" style="left:184px;top:179px;width:192px;height:20px;background:#f0f0f0;border-top:1px solid #fff;border-left:1px solid #fff;border-bottom:1px solid #fff"></div>
<div class="b" style="left:377px;top:179px;width:25px;height:20px;background:#f0f0f0;border-top:1px solid #fff;border-left:1px solid #fff;border-bottom:1px solid #fff"></div>
<div class="b" style="left:403px;top:179px;width:42px;height:20px;background:#f0f0f0;border-top:1px solid #fff;border-left:1px solid #fff;border-bottom:1px solid #fff"></div>
<div class="b" style="left:446px;top:179px;width:42px;height:20px;background:#f0f0f0;border-top:1px solid #fff;border-left:1px solid #fff;border-bottom:1px solid #fff"></div>
<div class="b" style="left:489px;top:179px;width:39px;height:20px;background:#f0f0f0;border-top:1px solid #fff;border-left:1px solid #fff;border-bottom:1px solid #fff"></div>
<div class="t " style="left:247px;top:185px;font-size:11px;line-height:11px;color:#000;transform:scaleX(0.94);transform-origin:0 0;">Risk Name</div>
<div class="b" style="left:357px;top:181px;width:18px;height:17px;background:linear-gradient(#fdfdfd,#e8edf3);border:1px solid #a8b0bc"></div>
<svg class="b" style="left:362px;top:188px" width="7" height="4" viewBox="0 0 7 4"><path d="M0 0h7L3.5 4z" fill="#666"/></svg>
<div class="b" style="left:383px;top:181px;width:18px;height:17px;background:linear-gradient(#fdfdfd,#e8edf3);border:1px solid #a8b0bc"></div>
<svg class="b" style="left:388px;top:188px" width="7" height="4" viewBox="0 0 7 4"><path d="M0 0h7L3.5 4z" fill="#666"/></svg>
<div class="t " style="left:407px;top:185px;font-size:11px;line-height:11px;color:#000;">Prol</div>
<div class="b" style="left:426px;top:181px;width:18px;height:17px;background:linear-gradient(#fdfdfd,#e8edf3);border:1px solid #a8b0bc"></div>
<svg class="b" style="left:431px;top:188px" width="7" height="4" viewBox="0 0 7 4"><path d="M0 0h7L3.5 4z" fill="#666"/></svg>
<div class="t " style="left:449px;top:185px;font-size:11px;line-height:11px;color:#000;">Impa</div>
<div class="b" style="left:469px;top:181px;width:18px;height:17px;background:linear-gradient(#fdfdfd,#e8edf3);border:1px solid #a8b0bc"></div>
<svg class="b" style="left:474px;top:188px" width="7" height="4" viewBox="0 0 7 4"><path d="M0 0h7L3.5 4z" fill="#666"/></svg>
<div class="t " style="left:492px;top:185px;font-size:11px;line-height:11px;color:#000;">Sco</div>
<div class="b" style="left:512px;top:181px;width:16px;height:16px;background:linear-gradient(#fdfdfd,#eaeef4);border:1px solid #b8c4d4;border-right:none"></div>
<svg class="b" style="left:516px;top:187px" width="9" height="5" viewBox="0 0 9 5"><path d="M0 0h9L4.5 5z" fill="#666"/></svg>
<div class="b" style="left:185px;top:200px;width:191px;height:582px;background:#fff"></div>
<div class="b" style="left:376px;top:200px;width:152px;height:582px;background:#f0f0f0"></div>
<div class="b" style="left:147px;top:200px;width:37px;height:582px;background:#f0f0f0"></div>
<div class="b" style="left:184px;top:200px;width:1px;height:582px;background:#a0a0a0"></div>
<div class="b" style="left:147px;top:223px;width:37px;height:1px;background:#a0a0a0"></div>
<div class="b" style="left:147px;top:224px;width:37px;height:1px;background:#fff"></div>
<div class="b" style="left:185px;top:223px;width:191px;height:1px;background:#f0f0f0"></div>
<div class="b" style="left:376px;top:223px;width:152px;height:1px;background:#f6f6f6"></div>
<div class="b" style="left:147px;top:245px;width:37px;height:1px;background:#a0a0a0"></div>
<div class="b" style="left:147px;top:246px;width:37px;height:1px;background:#fff"></div>
<div class="b" style="left:185px;top:245px;width:191px;height:1px;background:#f0f0f0"></div>
<div class="b" style="left:376px;top:245px;width:152px;height:1px;background:#f6f6f6"></div>
<div class="b" style="left:147px;top:267px;width:37px;height:1px;background:#a0a0a0"></div>
<div class="b" style="left:147px;top:268px;width:37px;height:1px;background:#fff"></div>
<div class="b" style="left:185px;top:267px;width:191px;height:1px;background:#f0f0f0"></div>
<div class="b" style="left:376px;top:267px;width:152px;height:1px;background:#f6f6f6"></div>
<div class="b" style="left:147px;top:289px;width:37px;height:1px;background:#a0a0a0"></div>
<div class="b" style="left:147px;top:290px;width:37px;height:1px;background:#fff"></div>
<div class="b" style="left:185px;top:289px;width:191px;height:1px;background:#f0f0f0"></div>
<div class="b" style="left:376px;top:289px;width:152px;height:1px;background:#f6f6f6"></div>
<div class="b" style="left:147px;top:311px;width:37px;height:1px;background:#a0a0a0"></div>
<div class="b" style="left:147px;top:312px;width:37px;height:1px;background:#fff"></div>
<div class="b" style="left:185px;top:311px;width:191px;height:1px;background:#f0f0f0"></div>
<div class="b" style="left:376px;top:311px;width:152px;height:1px;background:#f6f6f6"></div>
<div class="b" style="left:147px;top:333px;width:37px;height:1px;background:#a0a0a0"></div>
<div class="b" style="left:147px;top:334px;width:37px;height:1px;background:#fff"></div>
<div class="b" style="left:185px;top:333px;width:191px;height:1px;background:#f0f0f0"></div>
<div class="b" style="left:376px;top:333px;width:152px;height:1px;background:#f6f6f6"></div>
<div class="b" style="left:147px;top:355px;width:37px;height:1px;background:#a0a0a0"></div>
<div class="b" style="left:147px;top:356px;width:37px;height:1px;background:#fff"></div>
<div class="b" style="left:185px;top:355px;width:191px;height:1px;background:#f0f0f0"></div>
<div class="b" style="left:376px;top:355px;width:152px;height:1px;background:#f6f6f6"></div>
<div class="b" style="left:147px;top:377px;width:37px;height:1px;background:#a0a0a0"></div>
<div class="b" style="left:147px;top:378px;width:37px;height:1px;background:#fff"></div>
<div class="b" style="left:185px;top:377px;width:191px;height:1px;background:#f0f0f0"></div>
<div class="b" style="left:376px;top:377px;width:152px;height:1px;background:#f6f6f6"></div>
<div class="b" style="left:147px;top:399px;width:37px;height:1px;background:#a0a0a0"></div>
<div class="b" style="left:147px;top:400px;width:37px;height:1px;background:#fff"></div>
<div class="b" style="left:185px;top:399px;width:191px;height:1px;background:#f0f0f0"></div>
<div class="b" style="left:376px;top:399px;width:152px;height:1px;background:#f6f6f6"></div>
<div class="b" style="left:147px;top:421px;width:37px;height:1px;background:#a0a0a0"></div>
<div class="b" style="left:147px;top:422px;width:37px;height:1px;background:#fff"></div>
<div class="b" style="left:185px;top:421px;width:191px;height:1px;background:#f0f0f0"></div>
<div class="b" style="left:376px;top:421px;width:152px;height:1px;background:#f6f6f6"></div>
<div class="b" style="left:147px;top:443px;width:37px;height:1px;background:#a0a0a0"></div>
<div class="b" style="left:147px;top:444px;width:37px;height:1px;background:#fff"></div>
<div class="b" style="left:185px;top:443px;width:191px;height:1px;background:#f0f0f0"></div>
<div class="b" style="left:376px;top:443px;width:152px;height:1px;background:#f6f6f6"></div>
<div class="b" style="left:147px;top:465px;width:37px;height:1px;background:#a0a0a0"></div>
<div class="b" style="left:147px;top:466px;width:37px;height:1px;background:#fff"></div>
<div class="b" style="left:185px;top:465px;width:191px;height:1px;background:#f0f0f0"></div>
<div class="b" style="left:376px;top:465px;width:152px;height:1px;background:#f6f6f6"></div>
<div class="b" style="left:147px;top:487px;width:37px;height:1px;background:#a0a0a0"></div>
<div class="b" style="left:147px;top:488px;width:37px;height:1px;background:#fff"></div>
<div class="b" style="left:185px;top:487px;width:191px;height:1px;background:#f0f0f0"></div>
<div class="b" style="left:376px;top:487px;width:152px;height:1px;background:#f6f6f6"></div>
<div class="b" style="left:147px;top:509px;width:37px;height:1px;background:#a0a0a0"></div>
<div class="b" style="left:147px;top:510px;width:37px;height:1px;background:#fff"></div>
<div class="b" style="left:185px;top:509px;width:191px;height:1px;background:#f0f0f0"></div>
<div class="b" style="left:376px;top:509px;width:152px;height:1px;background:#f6f6f6"></div>
<div class="b" style="left:147px;top:531px;width:37px;height:1px;background:#a0a0a0"></div>
<div class="b" style="left:147px;top:532px;width:37px;height:1px;background:#fff"></div>
<div class="b" style="left:185px;top:531px;width:191px;height:1px;background:#f0f0f0"></div>
<div class="b" style="left:376px;top:531px;width:152px;height:1px;background:#f6f6f6"></div>
<div class="b" style="left:147px;top:553px;width:37px;height:1px;background:#a0a0a0"></div>
<div class="b" style="left:147px;top:554px;width:37px;height:1px;background:#fff"></div>
<div class="b" style="left:185px;top:553px;width:191px;height:1px;background:#f0f0f0"></div>
<div class="b" style="left:376px;top:553px;width:152px;height:1px;background:#f6f6f6"></div>
<div class="b" style="left:147px;top:575px;width:37px;height:1px;background:#a0a0a0"></div>
<div class="b" style="left:147px;top:576px;width:37px;height:1px;background:#fff"></div>
<div class="b" style="left:185px;top:575px;width:191px;height:1px;background:#f0f0f0"></div>
<div class="b" style="left:376px;top:575px;width:152px;height:1px;background:#f6f6f6"></div>
<div class="b" style="left:147px;top:597px;width:37px;height:1px;background:#a0a0a0"></div>
<div class="b" style="left:147px;top:598px;width:37px;height:1px;background:#fff"></div>
<div class="b" style="left:185px;top:597px;width:191px;height:1px;background:#f0f0f0"></div>
<div class="b" style="left:376px;top:597px;width:152px;height:1px;background:#f6f6f6"></div>
<div class="b" style="left:147px;top:619px;width:37px;height:1px;background:#a0a0a0"></div>
<div class="b" style="left:147px;top:620px;width:37px;height:1px;background:#fff"></div>
<div class="b" style="left:185px;top:619px;width:191px;height:1px;background:#f0f0f0"></div>
<div class="b" style="left:376px;top:619px;width:152px;height:1px;background:#f6f6f6"></div>
<div class="b" style="left:147px;top:641px;width:37px;height:1px;background:#a0a0a0"></div>
<div class="b" style="left:147px;top:642px;width:37px;height:1px;background:#fff"></div>
<div class="b" style="left:185px;top:641px;width:191px;height:1px;background:#f0f0f0"></div>
<div class="b" style="left:376px;top:641px;width:152px;height:1px;background:#f6f6f6"></div>
<div class="b" style="left:147px;top:663px;width:37px;height:1px;background:#a0a0a0"></div>
<div class="b" style="left:147px;top:664px;width:37px;height:1px;background:#fff"></div>
<div class="b" style="left:185px;top:663px;width:191px;height:1px;background:#f0f0f0"></div>
<div class="b" style="left:376px;top:663px;width:152px;height:1px;background:#f6f6f6"></div>
<div class="b" style="left:147px;top:685px;width:37px;height:1px;background:#a0a0a0"></div>
<div class="b" style="left:147px;top:686px;width:37px;height:1px;background:#fff"></div>
<div class="b" style="left:185px;top:685px;width:191px;height:1px;background:#f0f0f0"></div>
<div class="b" style="left:376px;top:685px;width:152px;height:1px;background:#f6f6f6"></div>
<div class="b" style="left:147px;top:707px;width:37px;height:1px;background:#a0a0a0"></div>
<div class="b" style="left:147px;top:708px;width:37px;height:1px;background:#fff"></div>
<div class="b" style="left:185px;top:707px;width:191px;height:1px;background:#f0f0f0"></div>
<div class="b" style="left:376px;top:707px;width:152px;height:1px;background:#f6f6f6"></div>
<div class="b" style="left:147px;top:729px;width:37px;height:1px;background:#a0a0a0"></div>
<div class="b" style="left:147px;top:730px;width:37px;height:1px;background:#fff"></div>
<div class="b" style="left:185px;top:729px;width:191px;height:1px;background:#f0f0f0"></div>
<div class="b" style="left:376px;top:729px;width:152px;height:1px;background:#f6f6f6"></div>
<div class="b" style="left:147px;top:751px;width:37px;height:1px;background:#a0a0a0"></div>
<div class="b" style="left:147px;top:752px;width:37px;height:1px;background:#fff"></div>
<div class="b" style="left:185px;top:751px;width:191px;height:1px;background:#f0f0f0"></div>
<div class="b" style="left:376px;top:751px;width:152px;height:1px;background:#f6f6f6"></div>
<div class="b" style="left:147px;top:773px;width:37px;height:1px;background:#a0a0a0"></div>
<div class="b" style="left:147px;top:774px;width:37px;height:1px;background:#fff"></div>
<div class="b" style="left:185px;top:773px;width:191px;height:1px;background:#f0f0f0"></div>
<div class="b" style="left:376px;top:773px;width:152px;height:1px;background:#f6f6f6"></div>
<div class="b" style="left:147px;top:200px;width:37px;height:1px;background:#fff"></div>
<div class="b" style="left:403px;top:200px;width:1px;height:582px;background:#f6f6f6"></div>
<div class="b" style="left:446px;top:200px;width:1px;height:582px;background:#f6f6f6"></div>
<div class="b" style="left:489px;top:200px;width:1px;height:582px;background:#f6f6f6"></div>
<div class="t" style="left:15px;width:300px;text-align:center;top:208px;font-size:11px;line-height:11px;color:#000;">1</div>
<svg class="b" style="left:187px;top:207px" width="14" height="12" viewBox="0 0 14 12"><defs><linearGradient id="wb" x1="0" y1="0" x2="1" y2="1"><stop offset="0" stop-color="#f4f8ff"/><stop offset="1" stop-color="#a8c8f8"/></linearGradient><radialGradient id="wd" cx="0.4" cy="0.4" r="0.7"><stop offset="0" stop-color="#fcfca0"/><stop offset="0.6" stop-color="#f8e818"/><stop offset="1" stop-color="#e8b000"/></radialGradient></defs><rect x="0.6" y="0.6" width="12.8" height="10.8" rx="1.6" fill="url(#wb)" stroke="#4a78d8" stroke-width="1.1"/><path d="M7 0 L13 6 L7 12 L1 6Z" fill="url(#wd)" stroke="#c08a00" stroke-width="0.9" stroke-dasharray="1 0.6"/><path d="M7 2.4 Q8.6 2.4 8.4 4.2 L7.6 7 H6.4 L5.6 4.2 Q5.4 2.4 7 2.4Z" fill="#f01a10"/><circle cx="7" cy="8.9" r="1.1" fill="#f01a10"/></svg>
<div class="t" style="left:208px;top:208px;width:170px;height:14px;overflow:hidden;font-size:11px;line-height:11px;color:#000;transform:scaleX(0.97);transform-origin:0 0">Delay in Financing</div>
<div class="b" style="left:404px;top:202px;width:42px;height:21px;background:#dcdc50"></div>
<div class="t " style="left:407px;top:208px;font-size:11px;line-height:11px;color:#000;">4</div>
<div class="b" style="left:447px;top:202px;width:42px;height:21px;background:#dcdc50"></div>
<div class="t " style="left:450px;top:208px;font-size:11px;line-height:11px;color:#000;">4</div>
<div class="b" style="left:490px;top:202px;width:38px;height:21px;background:#e0524a"></div>
<div class="t " style="left:493px;top:208px;font-size:11px;line-height:11px;color:#000;">16</div>
<div class="t" style="left:15px;width:300px;text-align:center;top:230px;font-size:11px;line-height:11px;color:#000;">2</div>
<svg class="b" style="left:187px;top:229px" width="14" height="12" viewBox="0 0 14 12"><defs><linearGradient id="wb" x1="0" y1="0" x2="1" y2="1"><stop offset="0" stop-color="#f4f8ff"/><stop offset="1" stop-color="#a8c8f8"/></linearGradient><radialGradient id="wd" cx="0.4" cy="0.4" r="0.7"><stop offset="0" stop-color="#fcfca0"/><stop offset="0.6" stop-color="#f8e818"/><stop offset="1" stop-color="#e8b000"/></radialGradient></defs><rect x="0.6" y="0.6" width="12.8" height="10.8" rx="1.6" fill="url(#wb)" stroke="#4a78d8" stroke-width="1.1"/><path d="M7 0 L13 6 L7 12 L1 6Z" fill="url(#wd)" stroke="#c08a00" stroke-width="0.9" stroke-dasharray="1 0.6"/><path d="M7 2.4 Q8.6 2.4 8.4 4.2 L7.6 7 H6.4 L5.6 4.2 Q5.4 2.4 7 2.4Z" fill="#f01a10"/><circle cx="7" cy="8.9" r="1.1" fill="#f01a10"/></svg>
<div class="t" style="left:208px;top:230px;width:170px;height:14px;overflow:hidden;font-size:11px;line-height:11px;color:#000;transform:scaleX(0.97);transform-origin:0 0">Not enought information about competitors</div>
<div class="b" style="left:404px;top:224px;width:42px;height:21px;background:#e0524a"></div>
<div class="t " style="left:407px;top:230px;font-size:11px;line-height:11px;color:#000;">5</div>
<div class="b" style="left:447px;top:224px;width:42px;height:21px;background:#6edc6a"></div>
<div class="t " style="left:450px;top:230px;font-size:11px;line-height:11px;color:#000;">2</div>
<div class="b" style="left:490px;top:224px;width:38px;height:21px;background:#dcdc50"></div>
<div class="t " style="left:493px;top:230px;font-size:11px;line-height:11px;color:#000;">10</div>
<div class="t" style="left:15px;width:300px;text-align:center;top:252px;font-size:11px;line-height:11px;color:#000;">3</div>
<svg class="b" style="left:187px;top:251px" width="14" height="12" viewBox="0 0 14 12"><defs><linearGradient id="wb" x1="0" y1="0" x2="1" y2="1"><stop offset="0" stop-color="#f4f8ff"/><stop offset="1" stop-color="#a8c8f8"/></linearGradient><radialGradient id="wd" cx="0.4" cy="0.4" r="0.7"><stop offset="0" stop-color="#fcfca0"/><stop offset="0.6" stop-color="#f8e818"/><stop offset="1" stop-color="#e8b000"/></radialGradient></defs><rect x="0.6" y="0.6" width="12.8" height="10.8" rx="1.6" fill="url(#wb)" stroke="#4a78d8" stroke-width="1.1"/><path d="M7 0 L13 6 L7 12 L1 6Z" fill="url(#wd)" stroke="#c08a00" stroke-width="0.9" stroke-dasharray="1 0.6"/><path d="M7 2.4 Q8.6 2.4 8.4 4.2 L7.6 7 H6.4 L5.6 4.2 Q5.4 2.4 7 2.4Z" fill="#f01a10"/><circle cx="7" cy="8.9" r="1.1" fill="#f01a10"/></svg>
<div class="t" style="left:208px;top:252px;width:170px;height:14px;overflow:hidden;font-size:11px;line-height:11px;color:#000;transform:scaleX(0.97);transform-origin:0 0">Other risks, related to the project</div>
<div class="b" style="left:404px;top:246px;width:42px;height:21px;background:#6edc6a"></div>
<div class="t " style="left:407px;top:252px;font-size:11px;line-height:11px;color:#000;">2</div>
<div class="b" style="left:447px;top:246px;width:42px;height:21px;background:#dcdc50"></div>
<div class="t " style="left:450px;top:252px;font-size:11px;line-height:11px;color:#000;">4</div>
<div class="b" style="left:490px;top:246px;width:38px;height:21px;background:#dcdc50"></div>
<div class="t " style="left:493px;top:252px;font-size:11px;line-height:11px;color:#000;">8</div>
<div class="t" style="left:15px;width:300px;text-align:center;top:274px;font-size:11px;line-height:11px;color:#000;">4</div>
<svg class="b" style="left:187px;top:273px" width="14" height="12" viewBox="0 0 14 12"><defs><linearGradient id="wb" x1="0" y1="0" x2="1" y2="1"><stop offset="0" stop-color="#f4f8ff"/><stop offset="1" stop-color="#a8c8f8"/></linearGradient><radialGradient id="wd" cx="0.4" cy="0.4" r="0.7"><stop offset="0" stop-color="#fcfca0"/><stop offset="0.6" stop-color="#f8e818"/><stop offset="1" stop-color="#e8b000"/></radialGradient></defs><rect x="0.6" y="0.6" width="12.8" height="10.8" rx="1.6" fill="url(#wb)" stroke="#4a78d8" stroke-width="1.1"/><path d="M7 0 L13 6 L7 12 L1 6Z" fill="url(#wd)" stroke="#c08a00" stroke-width="0.9" stroke-dasharray="1 0.6"/><path d="M7 2.4 Q8.6 2.4 8.4 4.2 L7.6 7 H6.4 L5.6 4.2 Q5.4 2.4 7 2.4Z" fill="#f01a10"/><circle cx="7" cy="8.9" r="1.1" fill="#f01a10"/></svg>
<div class="t" style="left:208px;top:274px;width:170px;height:14px;overflow:hidden;font-size:11px;line-height:11px;color:#000;transform:scaleX(0.97);transform-origin:0 0">Risks affecting whole company/division</div>
<div class="b" style="left:404px;top:268px;width:42px;height:21px;background:#6edc6a"></div>
<div class="t " style="left:407px;top:274px;font-size:11px;line-height:11px;color:#000;">1</div>
<div class="b" style="left:447px;top:268px;width:42px;height:21px;background:#6edc6a"></div>
<div class="t " style="left:450px;top:274px;font-size:11px;line-height:11px;color:#000;">2</div>
<div class="b" style="left:490px;top:268px;width:38px;height:21px;background:#6edc6a"></div>
<div class="t " style="left:493px;top:274px;font-size:11px;line-height:11px;color:#000;">2</div>
<div class="t" style="left:15px;width:300px;text-align:center;top:296px;font-size:11px;line-height:11px;color:#000;">5</div>
<svg class="b" style="left:187px;top:295px" width="14" height="12" viewBox="0 0 14 12"><defs><linearGradient id="wb" x1="0" y1="0" x2="1" y2="1"><stop offset="0" stop-color="#f4f8ff"/><stop offset="1" stop-color="#a8c8f8"/></linearGradient><radialGradient id="wd" cx="0.4" cy="0.4" r="0.7"><stop offset="0" stop-color="#fcfca0"/><stop offset="0.6" stop-color="#f8e818"/><stop offset="1" stop-color="#e8b000"/></radialGradient></defs><rect x="0.6" y="0.6" width="12.8" height="10.8" rx="1.6" fill="url(#wb)" stroke="#4a78d8" stroke-width="1.1"/><path d="M7 0 L13 6 L7 12 L1 6Z" fill="url(#wd)" stroke="#c08a00" stroke-width="0.9" stroke-dasharray="1 0.6"/><path d="M7 2.4 Q8.6 2.4 8.4 4.2 L7.6 7 H6.4 L5.6 4.2 Q5.4 2.4 7 2.4Z" fill="#f01a10"/><circle cx="7" cy="8.9" r="1.1" fill="#f01a10"/></svg>
<div class="t" style="left:208px;top:296px;width:170px;height:14px;overflow:hidden;font-size:11px;line-height:11px;color:#000;transform:scaleX(0.97);transform-origin:0 0">Selected name is taken</div>
<div class="b" style="left:404px;top:290px;width:42px;height:21px;background:#6edc6a"></div>
<div class="t " style="left:407px;top:296px;font-size:11px;line-height:11px;color:#000;">2</div>
<div class="b" style="left:447px;top:290px;width:42px;height:21px;background:#6edc6a"></div>
<div class="t " style="left:450px;top:296px;font-size:11px;line-height:11px;color:#000;">1</div>
<div class="b" style="left:490px;top:290px;width:38px;height:21px;background:#6edc6a"></div>
<div class="t " style="left:493px;top:296px;font-size:11px;line-height:11px;color:#000;">2</div>
<div class="t" style="left:15px;width:300px;text-align:center;top:318px;font-size:11px;line-height:11px;color:#000;">6</div>
<svg class="b" style="left:187px;top:317px" width="14" height="12" viewBox="0 0 14 12"><defs><linearGradient id="wb" x1="0" y1="0" x2="1" y2="1"><stop offset="0" stop-color="#f4f8ff"/><stop offset="1" stop-color="#a8c8f8"/></linearGradient><radialGradient id="wd" cx="0.4" cy="0.4" r="0.7"><stop offset="0" stop-color="#fcfca0"/><stop offset="0.6" stop-color="#f8e818"/><stop offset="1" stop-color="#e8b000"/></radialGradient></defs><rect x="0.6" y="0.6" width="12.8" height="10.8" rx="1.6" fill="url(#wb)" stroke="#4a78d8" stroke-width="1.1"/><path d="M7 0 L13 6 L7 12 L1 6Z" fill="url(#wd)" stroke="#c08a00" stroke-width="0.9" stroke-dasharray="1 0.6"/><path d="M7 2.4 Q8.6 2.4 8.4 4.2 L7.6 7 H6.4 L5.6 4.2 Q5.4 2.4 7 2.4Z" fill="#f01a10"/><circle cx="7" cy="8.9" r="1.1" fill="#f01a10"/></svg>
<div class="t" style="left:208px;top:318px;width:170px;height:14px;overflow:hidden;font-size:11px;line-height:11px;color:#000;transform:scaleX(0.97);transform-origin:0 0">Delay in patent and trademark search</div>
<div class="b" style="left:404px;top:312px;width:42px;height:21px;background:#6edc6a"></div>
<div class="t " style="left:407px;top:318px;font-size:11px;line-height:11px;color:#000;">2</div>
<div class="b" style="left:447px;top:312px;width:42px;height:21px;background:#6edc6a"></div>
<div class="t " style="left:450px;top:318px;font-size:11px;line-height:11px;color:#000;">1</div>
<div class="b" style="left:490px;top:312px;width:38px;height:21px;background:#6edc6a"></div>
<div class="t " style="left:493px;top:318px;font-size:11px;line-height:11px;color:#000;">2</div>
<div class="t" style="left:15px;width:300px;text-align:center;top:340px;font-size:11px;line-height:11px;color:#000;">7</div>
<svg class="b" style="left:187px;top:339px" width="14" height="12" viewBox="0 0 14 12"><defs><linearGradient id="wb" x1="0" y1="0" x2="1" y2="1"><stop offset="0" stop-color="#f4f8ff"/><stop offset="1" stop-color="#a8c8f8"/></linearGradient><radialGradient id="wd" cx="0.4" cy="0.4" r="0.7"><stop offset="0" stop-color="#fcfca0"/><stop offset="0.6" stop-color="#f8e818"/><stop offset="1" stop-color="#e8b000"/></radialGradient></defs><rect x="0.6" y="0.6" width="12.8" height="10.8" rx="1.6" fill="url(#wb)" stroke="#4a78d8" stroke-width="1.1"/><path d="M7 0 L13 6 L7 12 L1 6Z" fill="url(#wd)" stroke="#c08a00" stroke-width="0.9" stroke-dasharray="1 0.6"/><path d="M7 2.4 Q8.6 2.4 8.4 4.2 L7.6 7 H6.4 L5.6 4.2 Q5.4 2.4 7 2.4Z" fill="#f01a10"/><circle cx="7" cy="8.9" r="1.1" fill="#f01a10"/></svg>
<div class="t" style="left:208px;top:340px;width:170px;height:14px;overflow:hidden;font-size:11px;line-height:11px;color:#000;transform:scaleX(0.97);transform-origin:0 0">Cost information is not available</div>
<div class="b" style="left:404px;top:334px;width:42px;height:21px;background:#6edc6a"></div>
<div class="t " style="left:407px;top:340px;font-size:11px;line-height:11px;color:#000;">1</div>
<div class="b" style="left:447px;top:334px;width:42px;height:21px;background:#6edc6a"></div>
<div class="b" style="left:490px;top:334px;width:38px;height:21px;background:#6edc6a"></div>
<div class="t" style="left:15px;width:300px;text-align:center;top:362px;font-size:11px;line-height:11px;color:#000;">8</div>
<svg class="b" style="left:187px;top:361px" width="14" height="12" viewBox="0 0 14 12"><defs><linearGradient id="wb" x1="0" y1="0" x2="1" y2="1"><stop offset="0" stop-color="#f4f8ff"/><stop offset="1" stop-color="#a8c8f8"/></linearGradient><radialGradient id="wd" cx="0.4" cy="0.4" r="0.7"><stop offset="0" stop-color="#fcfca0"/><stop offset="0.6" stop-color="#f8e818"/><stop offset="1" stop-color="#e8b000"/></radialGradient></defs><rect x="0.6" y="0.6" width="12.8" height="10.8" rx="1.6" fill="url(#wb)" stroke="#4a78d8" stroke-width="1.1"/><path d="M7 0 L13 6 L7 12 L1 6Z" fill="url(#wd)" stroke="#c08a00" stroke-width="0.9" stroke-dasharray="1 0.6"/><path d="M7 2.4 Q8.6 2.4 8.4 4.2 L7.6 7 H6.4 L5.6 4.2 Q5.4 2.4 7 2.4Z" fill="#f01a10"/><circle cx="7" cy="8.9" r="1.1" fill="#f01a10"/></svg>
<div class="t" style="left:208px;top:362px;width:170px;height:14px;overflow:hidden;font-size:11px;line-height:11px;color:#000;transform:scaleX(0.97);transform-origin:0 0">Delay in getting level advice</div>
<div class="b" style="left:404px;top:356px;width:42px;height:21px;background:#e0524a"></div>
<div class="t " style="left:407px;top:362px;font-size:11px;line-height:11px;color:#000;">5</div>
<div class="b" style="left:447px;top:356px;width:42px;height:21px;background:#6edc6a"></div>
<div class="b" style="left:490px;top:356px;width:38px;height:21px;background:#dcdc50"></div>
<div class="t" style="left:15px;width:300px;text-align:center;top:384px;font-size:11px;line-height:11px;color:#000;">9</div>
<svg class="b" style="left:187px;top:383px" width="14" height="12" viewBox="0 0 14 12"><defs><linearGradient id="wb" x1="0" y1="0" x2="1" y2="1"><stop offset="0" stop-color="#f4f8ff"/><stop offset="1" stop-color="#a8c8f8"/></linearGradient><radialGradient id="wd" cx="0.4" cy="0.4" r="0.7"><stop offset="0" stop-color="#fcfca0"/><stop offset="0.6" stop-color="#f8e818"/><stop offset="1" stop-color="#e8b000"/></radialGradient></defs><rect x="0.6" y="0.6" width="12.8" height="10.8" rx="1.6" fill="url(#wb)" stroke="#4a78d8" stroke-width="1.1"/><path d="M7 0 L13 6 L7 12 L1 6Z" fill="url(#wd)" stroke="#c08a00" stroke-width="0.9" stroke-dasharray="1 0.6"/><path d="M7 2.4 Q8.6 2.4 8.4 4.2 L7.6 7 H6.4 L5.6 4.2 Q5.4 2.4 7 2.4Z" fill="#f01a10"/><circle cx="7" cy="8.9" r="1.1" fill="#f01a10"/></svg>
<div class="t" style="left:208px;top:384px;width:170px;height:14px;overflow:hidden;font-size:11px;line-height:11px;color:#000;transform:scaleX(0.97);transform-origin:0 0">Lack of knowledge of the specific</div>
<div class="b" style="left:404px;top:378px;width:42px;height:21px;background:#6edc6a"></div>
<div class="t " style="left:407px;top:384px;font-size:11px;line-height:11px;color:#000;">1</div>
<div class="b" style="left:447px;top:378px;width:42px;height:21px;background:#6edc6a"></div>
<div class="b" style="left:490px;top:378px;width:38px;height:21px;background:#6edc6a"></div>
<div class="t" style="left:15px;width:300px;text-align:center;top:406px;font-size:11px;line-height:11px;color:#000;">10</div>
<svg class="b" style="left:187px;top:405px" width="14" height="12" viewBox="0 0 14 12"><defs><linearGradient id="wb" x1="0" y1="0" x2="1" y2="1"><stop offset="0" stop-color="#f4f8ff"/><stop offset="1" stop-color="#a8c8f8"/></linearGradient><radialGradient id="wd" cx="0.4" cy="0.4" r="0.7"><stop offset="0" stop-color="#fcfca0"/><stop offset="0.6" stop-color="#f8e818"/><stop offset="1" stop-color="#e8b000"/></radialGradient></defs><rect x="0.6" y="0.6" width="12.8" height="10.8" rx="1.6" fill="url(#wb)" stroke="#4a78d8" stroke-width="1.1"/><path d="M7 0 L13 6 L7 12 L1 6Z" fill="url(#wd)" stroke="#c08a00" stroke-width="0.9" stroke-dasharray="1 0.6"/><path d="M7 2.4 Q8.6 2.4 8.4 4.2 L7.6 7 H6.4 L5.6 4.2 Q5.4 2.4 7 2.4Z" fill="#f01a10"/><circle cx="7" cy="8.9" r="1.1" fill="#f01a10"/></svg>
<div class="t" style="left:208px;top:406px;width:170px;height:14px;overflow:hidden;font-size:11px;line-height:11px;color:#000;transform:scaleX(0.97);transform-origin:0 0">Not enough data to analyze demand</div>
<div class="b" style="left:404px;top:400px;width:42px;height:21px;background:#dcdc50"></div>
<div class="t " style="left:407px;top:406px;font-size:11px;line-height:11px;color:#000;">4</div>
<div class="b" style="left:447px;top:400px;width:42px;height:21px;background:#6edc6a"></div>
<div class="b" style="left:490px;top:400px;width:38px;height:21px;background:#6edc6a"></div>
<div class="t" style="left:15px;width:300px;text-align:center;top:428px;font-size:11px;line-height:11px;color:#000;">11</div>
<svg class="b" style="left:187px;top:427px" width="14" height="12" viewBox="0 0 14 12"><defs><linearGradient id="wb" x1="0" y1="0" x2="1" y2="1"><stop offset="0" stop-color="#f4f8ff"/><stop offset="1" stop-color="#a8c8f8"/></linearGradient><radialGradient id="wd" cx="0.4" cy="0.4" r="0.7"><stop offset="0" stop-color="#fcfca0"/><stop offset="0.6" stop-color="#f8e818"/><stop offset="1" stop-color="#e8b000"/></radialGradient></defs><rect x="0.6" y="0.6" width="12.8" height="10.8" rx="1.6" fill="url(#wb)" stroke="#4a78d8" stroke-width="1.1"/><path d="M7 0 L13 6 L7 12 L1 6Z" fill="url(#wd)" stroke="#c08a00" stroke-width="0.9" stroke-dasharray="1 0.6"/><path d="M7 2.4 Q8.6 2.4 8.4 4.2 L7.6 7 H6.4 L5.6 4.2 Q5.4 2.4 7 2.4Z" fill="#f01a10"/><circle cx="7" cy="8.9" r="1.1" fill="#f01a10"/></svg>
<div class="t" style="left:208px;top:428px;width:170px;height:14px;overflow:hidden;font-size:11px;line-height:11px;color:#000;transform:scaleX(0.97);transform-origin:0 0">Not enough data to plan management</div>
<div class="b" style="left:404px;top:422px;width:42px;height:21px;background:#6edc6a"></div>
<div class="t " style="left:407px;top:428px;font-size:11px;line-height:11px;color:#000;">2</div>
<div class="b" style="left:447px;top:422px;width:42px;height:21px;background:#6edc6a"></div>
<div class="b" style="left:490px;top:422px;width:38px;height:21px;background:#6edc6a"></div>
<div class="t" style="left:15px;width:300px;text-align:center;top:450px;font-size:11px;line-height:11px;color:#000;">12</div>
<svg class="b" style="left:187px;top:449px" width="14" height="12" viewBox="0 0 14 12"><defs><linearGradient id="wb" x1="0" y1="0" x2="1" y2="1"><stop offset="0" stop-color="#f4f8ff"/><stop offset="1" stop-color="#a8c8f8"/></linearGradient><radialGradient id="wd" cx="0.4" cy="0.4" r="0.7"><stop offset="0" stop-color="#fcfca0"/><stop offset="0.6" stop-color="#f8e818"/><stop offset="1" stop-color="#e8b000"/></radialGradient></defs><rect x="0.6" y="0.6" width="12.8" height="10.8" rx="1.6" fill="url(#wb)" stroke="#4a78d8" stroke-width="1.1"/><path d="M7 0 L13 6 L7 12 L1 6Z" fill="url(#wd)" stroke="#c08a00" stroke-width="0.9" stroke-dasharray="1 0.6"/><path d="M7 2.4 Q8.6 2.4 8.4 4.2 L7.6 7 H6.4 L5.6 4.2 Q5.4 2.4 7 2.4Z" fill="#f01a10"/><circle cx="7" cy="8.9" r="1.1" fill="#f01a10"/></svg>
<div class="t" style="left:208px;top:450px;width:170px;height:14px;overflow:hidden;font-size:11px;line-height:11px;color:#000;transform:scaleX(0.97);transform-origin:0 0">Problem with hiring</div>
<div class="b" style="left:404px;top:444px;width:42px;height:21px;background:#6edc6a"></div>
<div class="t " style="left:407px;top:450px;font-size:11px;line-height:11px;color:#000;">1</div>
<div class="b" style="left:447px;top:444px;width:42px;height:21px;background:#6edc6a"></div>
<div class="b" style="left:490px;top:444px;width:38px;height:21px;background:#6edc6a"></div>
<div class="t" style="left:15px;width:300px;text-align:center;top:472px;font-size:11px;line-height:11px;color:#000;">13</div>
<svg class="b" style="left:187px;top:471px" width="14" height="12" viewBox="0 0 14 12"><defs><linearGradient id="wb" x1="0" y1="0" x2="1" y2="1"><stop offset="0" stop-color="#f4f8ff"/><stop offset="1" stop-color="#a8c8f8"/></linearGradient><radialGradient id="wd" cx="0.4" cy="0.4" r="0.7"><stop offset="0" stop-color="#fcfca0"/><stop offset="0.6" stop-color="#f8e818"/><stop offset="1" stop-color="#e8b000"/></radialGradient></defs><rect x="0.6" y="0.6" width="12.8" height="10.8" rx="1.6" fill="url(#wb)" stroke="#4a78d8" stroke-width="1.1"/><path d="M7 0 L13 6 L7 12 L1 6Z" fill="url(#wd)" stroke="#c08a00" stroke-width="0.9" stroke-dasharray="1 0.6"/><path d="M7 2.4 Q8.6 2.4 8.4 4.2 L7.6 7 H6.4 L5.6 4.2 Q5.4 2.4 7 2.4Z" fill="#f01a10"/><circle cx="7" cy="8.9" r="1.1" fill="#f01a10"/></svg>
<div class="t" style="left:208px;top:472px;width:170px;height:14px;overflow:hidden;font-size:11px;line-height:11px;color:#000;transform:scaleX(0.97);transform-origin:0 0">Resource Risks</div>
<div class="t" style="left:15px;width:300px;text-align:center;top:494px;font-size:11px;line-height:11px;color:#000;">14</div>
<svg class="b" style="left:187px;top:493px" width="14" height="12" viewBox="0 0 14 12"><defs><linearGradient id="wb" x1="0" y1="0" x2="1" y2="1"><stop offset="0" stop-color="#f4f8ff"/><stop offset="1" stop-color="#a8c8f8"/></linearGradient><radialGradient id="wd" cx="0.4" cy="0.4" r="0.7"><stop offset="0" stop-color="#fcfca0"/><stop offset="0.6" stop-color="#f8e818"/><stop offset="1" stop-color="#e8b000"/></radialGradient></defs><rect x="0.6" y="0.6" width="12.8" height="10.8" rx="1.6" fill="url(#wb)" stroke="#4a78d8" stroke-width="1.1"/><path d="M7 0 L13 6 L7 12 L1 6Z" fill="url(#wd)" stroke="#c08a00" stroke-width="0.9" stroke-dasharray="1 0.6"/><path d="M7 2.4 Q8.6 2.4 8.4 4.2 L7.6 7 H6.4 L5.6 4.2 Q5.4 2.4 7 2.4Z" fill="#f01a10"/><circle cx="7" cy="8.9" r="1.1" fill="#f01a10"/></svg>
<div class="t" style="left:208px;top:494px;width:170px;height:14px;overflow:hidden;font-size:11px;line-height:11px;color:#000;transform:scaleX(0.97);transform-origin:0 0">Staff turnover</div>
<div class="b" style="left:404px;top:488px;width:42px;height:21px;background:#6edc6a"></div>
<div class="t " style="left:407px;top:494px;font-size:11px;line-height:11px;color:#000;">1</div>
<div class="b" style="left:447px;top:488px;width:42px;height:21px;background:#6edc6a"></div>
<div class="b" style="left:490px;top:488px;width:38px;height:21px;background:#6edc6a"></div>
<div class="b" style="left:528px;top:178px;width:16px;height:604px;background:repeating-conic-gradient(#fbfbfb 0 25%, #e8e8e8 0 50%) 0 0/2px 2px"></div>
<div class="b" style="left:528px;top:178px;width:16px;height:16px;background:#f0f0f0;border-top:1px solid #fff;border-left:1px solid #fff;border-right:1px solid #a0a0a0;border-bottom:1px solid #a0a0a0"></div>
<svg class="b" style="left:532px;top:184px" width="8" height="5" viewBox="0 0 8 5"><path d="M0 5L4 0L8 5z" fill="#000"/></svg>
<div class="b" style="left:528px;top:195px;width:16px;height:17px;background:#f0f0f0;border-top:1px solid #fff;border-left:1px solid #fff;border-right:1px solid #a0a0a0;border-bottom:1px solid #a0a0a0"></div>
<div class="b" style="left:528px;top:765px;width:16px;height:16px;background:#f0f0f0;border-top:1px solid #fff;border-left:1px solid #fff;border-right:1px solid #a0a0a0;border-bottom:1px solid #a0a0a0"></div>
<svg class="b" style="left:532px;top:771px" width="8" height="5" viewBox="0 0 8 5"><path d="M0 0L4 5L8 0z" fill="#000"/></svg>
<div class="b" style="left:147px;top:782px;width:381px;height:16px;background:repeating-conic-gradient(#fbfbfb 0 25%, #e8e8e8 0 50%) 0 0/2px 2px"></div>
<div class="b" style="left:147px;top:782px;width:17px;height:16px;background:#f0f0f0;border-top:1px solid #fff;border-left:1px solid #fff;border-right:1px solid #808080;border-bottom:1px solid #808080"></div>
<svg class="b" style="left:152px;top:786px" width="5" height="8" viewBox="0 0 5 8"><path d="M5 0L0 4L5 8z" fill="#000"/></svg>
<div class="b" style="left:164px;top:782px;width:17px;height:16px;background:#f0f0f0;border-top:1px solid #fff;border-left:1px solid #fff;border-right:1px solid #808080;border-bottom:1px solid #808080"></div>
<div class="b" style="left:510px;top:782px;width:18px;height:16px;background:#f0f0f0;border-top:1px solid #fff;border-left:1px solid #fff;border-right:1px solid #808080;border-bottom:1px solid #808080"></div>
<svg class="b" style="left:517px;top:786px" width="5" height="8" viewBox="0 0 5 8"><path d="M0 0L5 4L0 8z" fill="#000"/></svg>
<div class="b" style="left:528px;top:782px;width:16px;height:16px;background:#fff"></div>
<div class="b" style="left:549px;top:144px;width:719px;height:655px;background:#a8a8a8"></div>
<div class="b" style="left:550px;top:145px;width:718px;height:654px;background:#646464"></div>
<div class="b" style="left:551px;top:146px;width:717px;height:653px;background:#f0f0f0"></div>
<div class="b" style="left:551px;top:146px;width:717px;height:32px;background:#fff;border-top:1px solid #000;border-bottom:1px solid #000"></div>
<svg class="b" style="left:712px;top:153px" width="19" height="19" viewBox="0 0 19 19"><circle cx="9.5" cy="9.5" r="8.8" fill="#f4f4f4" stroke="#222" stroke-width="1.2"/><defs><radialGradient id="rg" cx="0.35" cy="0.3" r="0.75"><stop offset="0" stop-color="#d8d8d8"/><stop offset="0.5" stop-color="#707070"/><stop offset="1" stop-color="#202020"/></radialGradient></defs><circle cx="9.5" cy="9.5" r="6.2" fill="url(#rg)"/></svg>
<div class="t " style="left:736px;top:157px;font-size:11px;line-height:11px;color:#000;transform:scaleX(0.98);transform-origin:0 0;">Threats</div>
<svg class="b" style="left:909px;top:153px" width="19" height="19" viewBox="0 0 19 19"><defs><linearGradient id="rg2" x1="0" y1="0" x2="0" y2="1"><stop offset="0" stop-color="#fdfdfd"/><stop offset="1" stop-color="#d8d8d8"/></linearGradient></defs><circle cx="9.5" cy="9.5" r="8.8" fill="url(#rg2)" stroke="#222" stroke-width="1.2"/></svg>
<div class="t " style="left:933px;top:157px;font-size:11px;line-height:11px;color:#000;transform:scaleX(0.97);transform-origin:0 0;">Opportunities</div>
<div class="t " style="left:555px;top:190px;font-size:11px;line-height:11px;color:#000;">Number</div>
<div class="t " style="left:555px;top:202px;font-size:11px;line-height:11px;color:#000;">of Risks</div>
<svg class="b" style="left:552px;top:225px" width="26" height="482" viewBox="0 0 26 482"><path d="M12.5 1 L23.5 37.5 H19.5 V480 H5.5 V37.5 H1.5 Z" fill="#dcdcdc" stroke="#7a7a7a" stroke-width="1"/></svg>
<div class="b" style="left:624px;top:206px;width:36px;height:13px;background:linear-gradient(90deg,#24a060,#2eb06a 50%,#24a060);border-right:2px solid #17703f;border-bottom:2px solid #17703f;border-top:1px solid #2eb06a"></div>
<div class="t " style="left:673px;top:207px;font-size:11px;line-height:11px;color:#000;">Low</div>
<div class="b" style="left:727px;top:206px;width:36px;height:13px;background:linear-gradient(90deg,#eeb060,#f2bc70 50%,#eeb060);border-right:2px solid #d08a2a;border-bottom:2px solid #d08a2a;border-top:1px solid #f2bc70"></div>
<div class="t " style="left:776px;top:207px;font-size:11px;line-height:11px;color:#000;">Medium</div>
<div class="b" style="left:830px;top:206px;width:36px;height:13px;background:linear-gradient(90deg,#f00,#ff2020 50%,#f00);border-right:2px solid #b00000;border-bottom:2px solid #b00000;border-top:1px solid #ff2020"></div>
<div class="t " style="left:879px;top:207px;font-size:11px;line-height:11px;color:#000;">Critical</div>
<div class="b" style="left:611px;top:226px;width:636px;height:480px;background:#fff;border-left:1px solid #6a6a6a;border-top:1px solid #8a8a8a;border-right:1px solid #7a7a7a;border-bottom:1px solid #6a6a6a"></div>
<div class="b" style="left:612px;top:660px;width:634px;height:1px;background:#e8e8e8"></div>
<div class="b" style="left:607px;top:660px;width:4px;height:1px;background:#000"></div>
<div class="t" style="left:573px;width:30px;text-align:right;top:655px;font-size:11px;line-height:11px;color:#000">1</div>
<div class="b" style="left:612px;top:614px;width:634px;height:1px;background:#e8e8e8"></div>
<div class="b" style="left:607px;top:614px;width:4px;height:1px;background:#000"></div>
<div class="t" style="left:573px;width:30px;text-align:right;top:609px;font-size:11px;line-height:11px;color:#000">2</div>
<div class="b" style="left:612px;top:569px;width:634px;height:1px;background:#e8e8e8"></div>
<div class="b" style="left:607px;top:569px;width:4px;height:1px;background:#000"></div>
<div class="t" style="left:573px;width:30px;text-align:right;top:564px;font-size:11px;line-height:11px;color:#000">3</div>
<div class="b" style="left:612px;top:523px;width:634px;height:1px;background:#e8e8e8"></div>
<div class="b" style="left:607px;top:523px;width:4px;height:1px;background:#000"></div>
<div class="t" style="left:573px;width:30px;text-align:right;top:518px;font-size:11px;line-height:11px;color:#000">4</div>
<div class="b" style="left:612px;top:478px;width:634px;height:1px;background:#e8e8e8"></div>
<div class="b" style="left:607px;top:478px;width:4px;height:1px;background:#000"></div>
<div class="t" style="left:573px;width:30px;text-align:right;top:473px;font-size:11px;line-height:11px;color:#000">5</div>
<div class="b" style="left:612px;top:432px;width:634px;height:1px;background:#e8e8e8"></div>
<div class="b" style="left:607px;top:432px;width:4px;height:1px;background:#000"></div>
<div class="t" style="left:573px;width:30px;text-align:right;top:427px;font-size:11px;line-height:11px;color:#000">6</div>
<div class="b" style="left:612px;top:387px;width:634px;height:1px;background:#e8e8e8"></div>
<div class="b" style="left:607px;top:387px;width:4px;height:1px;background:#000"></div>
<div class="t" style="left:573px;width:30px;text-align:right;top:382px;font-size:11px;line-height:11px;color:#000">7</div>
<div class="b" style="left:612px;top:341px;width:634px;height:1px;background:#e8e8e8"></div>
<div class="b" style="left:607px;top:341px;width:4px;height:1px;background:#000"></div>
<div class="t" style="left:573px;width:30px;text-align:right;top:336px;font-size:11px;line-height:11px;color:#000">8</div>
<div class="b" style="left:612px;top:296px;width:634px;height:1px;background:#e8e8e8"></div>
<div class="b" style="left:607px;top:296px;width:4px;height:1px;background:#000"></div>
<div class="t" style="left:573px;width:30px;text-align:right;top:291px;font-size:11px;line-height:11px;color:#000">9</div>
<div class="b" style="left:612px;top:250px;width:634px;height:1px;background:#e8e8e8"></div>
<div class="b" style="left:607px;top:250px;width:4px;height:1px;background:#000"></div>
<div class="t" style="left:573px;width:30px;text-align:right;top:245px;font-size:11px;line-height:11px;color:#000">10</div>
<div class="t" style="left:573px;width:30px;text-align:right;top:700px;font-size:11px;line-height:11px;color:#000">0</div>
<div class="b" style="left:679px;top:227px;width:1px;height:478px;background:#ececec"></div>
<div class="b" style="left:679px;top:706px;width:1px;height:5px;background:#000"></div>
<div class="b" style="left:742px;top:227px;width:1px;height:478px;background:#ececec"></div>
<div class="b" style="left:742px;top:706px;width:1px;height:5px;background:#000"></div>
<div class="b" style="left:805px;top:227px;width:1px;height:478px;background:#ececec"></div>
<div class="b" style="left:805px;top:706px;width:1px;height:5px;background:#000"></div>
<div class="b" style="left:868px;top:227px;width:1px;height:478px;background:#ececec"></div>
<div class="b" style="left:868px;top:706px;width:1px;height:5px;background:#000"></div>
<div class="b" style="left:931px;top:227px;width:1px;height:478px;background:#ececec"></div>
<div class="b" style="left:931px;top:706px;width:1px;height:5px;background:#000"></div>
<div class="b" style="left:994px;top:227px;width:1px;height:478px;background:#ececec"></div>
<div class="b" style="left:994px;top:706px;width:1px;height:5px;background:#000"></div>
<div class="b" style="left:1057px;top:227px;width:1px;height:478px;background:#ececec"></div>
<div class="b" style="left:1057px;top:706px;width:1px;height:5px;background:#000"></div>
<div class="b" style="left:1120px;top:227px;width:1px;height:478px;background:#ececec"></div>
<div class="b" style="left:1120px;top:706px;width:1px;height:5px;background:#000"></div>
<div class="b" style="left:1183px;top:227px;width:1px;height:478px;background:#ececec"></div>
<div class="b" style="left:1183px;top:706px;width:1px;height:5px;background:#000"></div>
<div class="t" style="left:497px;width:300px;text-align:center;top:710px;font-size:11px;line-height:11px;color:#000;transform:scaleX(1.02);transform-origin:50% 0;">August</div>
<div class="t" style="left:497px;width:300px;text-align:center;top:729px;font-size:11px;line-height:11px;color:#000;transform:scaleX(0.97);transform-origin:50% 0;">2021</div>
<div class="b" style="left:624px;top:251px;width:14px;height:454px;background:linear-gradient(90deg,#3ccf80 0 1px,#2aa862 1px,#2eb06a 11px,#167a42 12px,#0c5a2c 14px)"></div>
<div class="b" style="left:625px;top:251px;width:11px;height:1px;background:#5ad890"></div>
<div class="b" style="left:638px;top:252px;width:1px;height:453px;background:#c0ecd4"></div>
<div class="b" style="left:639px;top:615px;width:14px;height:90px;background:linear-gradient(90deg,#f6d6a4 0 1px,#ecb05c 1px,#f2bc6c 11px,#d08a20 12px,#b87410 14px)"></div>
<div class="b" style="left:640px;top:615px;width:11px;height:1px;background:#f6d4a0"></div>
<div class="b" style="left:653px;top:616px;width:1px;height:89px;background:#fbe4c8"></div>
<div class="b" style="left:654px;top:661px;width:14px;height:44px;background:linear-gradient(90deg,#ff7070 0 1px,#ff0000 1px,#ff1010 11px,#c00000 12px,#a00000 14px)"></div>
<div class="b" style="left:655px;top:661px;width:11px;height:1px;background:#ff6868"></div>
<div class="b" style="left:668px;top:662px;width:1px;height:43px;background:#ffd0d0"></div>
<div class="t" style="left:560px;width:300px;text-align:center;top:710px;font-size:11px;line-height:11px;color:#000;transform:scaleX(1.02);transform-origin:50% 0;">September</div>
<div class="t" style="left:560px;width:300px;text-align:center;top:729px;font-size:11px;line-height:11px;color:#000;transform:scaleX(0.97);transform-origin:50% 0;">2021</div>
<div class="b" style="left:687px;top:251px;width:14px;height:454px;background:linear-gradient(90deg,#3ccf80 0 1px,#2aa862 1px,#2eb06a 11px,#167a42 12px,#0c5a2c 14px)"></div>
<div class="b" style="left:688px;top:251px;width:11px;height:1px;background:#5ad890"></div>
<div class="b" style="left:701px;top:252px;width:1px;height:453px;background:#c0ecd4"></div>
<div class="b" style="left:702px;top:615px;width:14px;height:90px;background:linear-gradient(90deg,#f6d6a4 0 1px,#ecb05c 1px,#f2bc6c 11px,#d08a20 12px,#b87410 14px)"></div>
<div class="b" style="left:703px;top:615px;width:11px;height:1px;background:#f6d4a0"></div>
<div class="b" style="left:716px;top:616px;width:1px;height:89px;background:#fbe4c8"></div>
<div class="b" style="left:717px;top:661px;width:14px;height:44px;background:linear-gradient(90deg,#ff7070 0 1px,#ff0000 1px,#ff1010 11px,#c00000 12px,#a00000 14px)"></div>
<div class="b" style="left:718px;top:661px;width:11px;height:1px;background:#ff6868"></div>
<div class="b" style="left:731px;top:662px;width:1px;height:43px;background:#ffd0d0"></div>
<div class="t" style="left:623px;width:300px;text-align:center;top:710px;font-size:11px;line-height:11px;color:#000;transform:scaleX(1.02);transform-origin:50% 0;">October</div>
<div class="t" style="left:623px;width:300px;text-align:center;top:729px;font-size:11px;line-height:11px;color:#000;transform:scaleX(0.97);transform-origin:50% 0;">2021</div>
<div class="b" style="left:750px;top:251px;width:14px;height:454px;background:linear-gradient(90deg,#3ccf80 0 1px,#2aa862 1px,#2eb06a 11px,#167a42 12px,#0c5a2c 14px)"></div>
<div class="b" style="left:751px;top:251px;width:11px;height:1px;background:#5ad890"></div>
<div class="b" style="left:764px;top:252px;width:1px;height:453px;background:#c0ecd4"></div>
<div class="b" style="left:765px;top:615px;width:14px;height:90px;background:linear-gradient(90deg,#f6d6a4 0 1px,#ecb05c 1px,#f2bc6c 11px,#d08a20 12px,#b87410 14px)"></div>
<div class="b" style="left:766px;top:615px;width:11px;height:1px;background:#f6d4a0"></div>
<div class="b" style="left:779px;top:616px;width:1px;height:89px;background:#fbe4c8"></div>
<div class="b" style="left:780px;top:661px;width:14px;height:44px;background:linear-gradient(90deg,#ff7070 0 1px,#ff0000 1px,#ff1010 11px,#c00000 12px,#a00000 14px)"></div>
<div class="b" style="left:781px;top:661px;width:11px;height:1px;background:#ff6868"></div>
<div class="b" style="left:794px;top:662px;width:1px;height:43px;background:#ffd0d0"></div>
<div class="t" style="left:686px;width:300px;text-align:center;top:710px;font-size:11px;line-height:11px;color:#000;transform:scaleX(1.02);transform-origin:50% 0;">November</div>
<div class="t" style="left:686px;width:300px;text-align:center;top:729px;font-size:11px;line-height:11px;color:#000;transform:scaleX(0.97);transform-origin:50% 0;">2021</div>
<div class="b" style="left:813px;top:251px;width:14px;height:454px;background:linear-gradient(90deg,#3ccf80 0 1px,#2aa862 1px,#2eb06a 11px,#167a42 12px,#0c5a2c 14px)"></div>
<div class="b" style="left:814px;top:251px;width:11px;height:1px;background:#5ad890"></div>
<div class="b" style="left:827px;top:252px;width:1px;height:453px;background:#c0ecd4"></div>
<div class="b" style="left:828px;top:615px;width:14px;height:90px;background:linear-gradient(90deg,#f6d6a4 0 1px,#ecb05c 1px,#f2bc6c 11px,#d08a20 12px,#b87410 14px)"></div>
<div class="b" style="left:829px;top:615px;width:11px;height:1px;background:#f6d4a0"></div>
<div class="b" style="left:842px;top:616px;width:1px;height:89px;background:#fbe4c8"></div>
<div class="b" style="left:843px;top:661px;width:14px;height:44px;background:linear-gradient(90deg,#ff7070 0 1px,#ff0000 1px,#ff1010 11px,#c00000 12px,#a00000 14px)"></div>
<div class="b" style="left:844px;top:661px;width:11px;height:1px;background:#ff6868"></div>
<div class="b" style="left:857px;top:662px;width:1px;height:43px;background:#ffd0d0"></div>
<div class="t" style="left:749px;width:300px;text-align:center;top:710px;font-size:11px;line-height:11px;color:#000;transform:scaleX(1.02);transform-origin:50% 0;">December</div>
<div class="t" style="left:749px;width:300px;text-align:center;top:729px;font-size:11px;line-height:11px;color:#000;transform:scaleX(0.97);transform-origin:50% 0;">2021</div>
<div class="b" style="left:876px;top:251px;width:14px;height:454px;background:linear-gradient(90deg,#3ccf80 0 1px,#2aa862 1px,#2eb06a 11px,#167a42 12px,#0c5a2c 14px)"></div>
<div class="b" style="left:877px;top:251px;width:11px;height:1px;background:#5ad890"></div>
<div class="b" style="left:890px;top:252px;width:1px;height:453px;background:#c0ecd4"></div>
<div class="b" style="left:891px;top:615px;width:14px;height:90px;background:linear-gradient(90deg,#f6d6a4 0 1px,#ecb05c 1px,#f2bc6c 11px,#d08a20 12px,#b87410 14px)"></div>
<div class="b" style="left:892px;top:615px;width:11px;height:1px;background:#f6d4a0"></div>
<div class="b" style="left:905px;top:616px;width:1px;height:89px;background:#fbe4c8"></div>
<div class="b" style="left:906px;top:661px;width:14px;height:44px;background:linear-gradient(90deg,#ff7070 0 1px,#ff0000 1px,#ff1010 11px,#c00000 12px,#a00000 14px)"></div>
<div class="b" style="left:907px;top:661px;width:11px;height:1px;background:#ff6868"></div>
<div class="b" style="left:920px;top:662px;width:1px;height:43px;background:#ffd0d0"></div>
<div class="t" style="left:812px;width:300px;text-align:center;top:710px;font-size:11px;line-height:11px;color:#000;transform:scaleX(1.02);transform-origin:50% 0;">January</div>
<div class="t" style="left:812px;width:300px;text-align:center;top:729px;font-size:11px;line-height:11px;color:#000;transform:scaleX(0.97);transform-origin:50% 0;">2022</div>
<div class="b" style="left:939px;top:251px;width:14px;height:454px;background:linear-gradient(90deg,#3ccf80 0 1px,#2aa862 1px,#2eb06a 11px,#167a42 12px,#0c5a2c 14px)"></div>
<div class="b" style="left:940px;top:251px;width:11px;height:1px;background:#5ad890"></div>
<div class="b" style="left:953px;top:252px;width:1px;height:453px;background:#c0ecd4"></div>
<div class="b" style="left:954px;top:615px;width:14px;height:90px;background:linear-gradient(90deg,#f6d6a4 0 1px,#ecb05c 1px,#f2bc6c 11px,#d08a20 12px,#b87410 14px)"></div>
<div class="b" style="left:955px;top:615px;width:11px;height:1px;background:#f6d4a0"></div>
<div class="b" style="left:968px;top:616px;width:1px;height:89px;background:#fbe4c8"></div>
<div class="b" style="left:969px;top:661px;width:14px;height:44px;background:linear-gradient(90deg,#ff7070 0 1px,#ff0000 1px,#ff1010 11px,#c00000 12px,#a00000 14px)"></div>
<div class="b" style="left:970px;top:661px;width:11px;height:1px;background:#ff6868"></div>
<div class="b" style="left:983px;top:662px;width:1px;height:43px;background:#ffd0d0"></div>
<div class="t" style="left:875px;width:300px;text-align:center;top:710px;font-size:11px;line-height:11px;color:#000;transform:scaleX(1.02);transform-origin:50% 0;">February</div>
<div class="t" style="left:875px;width:300px;text-align:center;top:729px;font-size:11px;line-height:11px;color:#000;transform:scaleX(0.97);transform-origin:50% 0;">2022</div>
<div class="b" style="left:1002px;top:251px;width:14px;height:454px;background:linear-gradient(90deg,#3ccf80 0 1px,#2aa862 1px,#2eb06a 11px,#167a42 12px,#0c5a2c 14px)"></div>
<div class="b" style="left:1003px;top:251px;width:11px;height:1px;background:#5ad890"></div>
<div class="b" style="left:1016px;top:252px;width:1px;height:453px;background:#c0ecd4"></div>
<div class="b" style="left:1017px;top:615px;width:14px;height:90px;background:linear-gradient(90deg,#f6d6a4 0 1px,#ecb05c 1px,#f2bc6c 11px,#d08a20 12px,#b87410 14px)"></div>
<div class="b" style="left:1018px;top:615px;width:11px;height:1px;background:#f6d4a0"></div>
<div class="b" style="left:1031px;top:616px;width:1px;height:89px;background:#fbe4c8"></div>
<div class="b" style="left:1032px;top:661px;width:14px;height:44px;background:linear-gradient(90deg,#ff7070 0 1px,#ff0000 1px,#ff1010 11px,#c00000 12px,#a00000 14px)"></div>
<div class="b" style="left:1033px;top:661px;width:11px;height:1px;background:#ff6868"></div>
<div class="b" style="left:1046px;top:662px;width:1px;height:43px;background:#ffd0d0"></div>
<div class="t" style="left:938px;width:300px;text-align:center;top:710px;font-size:11px;line-height:11px;color:#000;transform:scaleX(1.02);transform-origin:50% 0;">March</div>
<div class="t" style="left:938px;width:300px;text-align:center;top:729px;font-size:11px;line-height:11px;color:#000;transform:scaleX(0.97);transform-origin:50% 0;">2022</div>
<div class="b" style="left:1065px;top:297px;width:14px;height:408px;background:linear-gradient(90deg,#3ccf80 0 1px,#2aa862 1px,#2eb06a 11px,#167a42 12px,#0c5a2c 14px)"></div>
<div class="b" style="left:1066px;top:297px;width:11px;height:1px;background:#5ad890"></div>
<div class="b" style="left:1079px;top:298px;width:1px;height:407px;background:#c0ecd4"></div>
<div class="b" style="left:1080px;top:570px;width:14px;height:135px;background:linear-gradient(90deg,#f6d6a4 0 1px,#ecb05c 1px,#f2bc6c 11px,#d08a20 12px,#b87410 14px)"></div>
<div class="b" style="left:1081px;top:570px;width:11px;height:1px;background:#f6d4a0"></div>
<div class="b" style="left:1094px;top:571px;width:1px;height:134px;background:#fbe4c8"></div>
<div class="b" style="left:1095px;top:661px;width:14px;height:44px;background:linear-gradient(90deg,#ff7070 0 1px,#ff0000 1px,#ff1010 11px,#c00000 12px,#a00000 14px)"></div>
<div class="b" style="left:1096px;top:661px;width:11px;height:1px;background:#ff6868"></div>
<div class="b" style="left:1109px;top:662px;width:1px;height:43px;background:#ffd0d0"></div>
<div class="t" style="left:1001px;width:300px;text-align:center;top:710px;font-size:11px;line-height:11px;color:#000;transform:scaleX(1.02);transform-origin:50% 0;">April</div>
<div class="t" style="left:1001px;width:300px;text-align:center;top:729px;font-size:11px;line-height:11px;color:#000;transform:scaleX(0.97);transform-origin:50% 0;">2022</div>
<div class="b" style="left:1128px;top:297px;width:14px;height:408px;background:linear-gradient(90deg,#3ccf80 0 1px,#2aa862 1px,#2eb06a 11px,#167a42 12px,#0c5a2c 14px)"></div>
<div class="b" style="left:1129px;top:297px;width:11px;height:1px;background:#5ad890"></div>
<div class="b" style="left:1142px;top:298px;width:1px;height:407px;background:#c0ecd4"></div>
<div class="b" style="left:1143px;top:570px;width:14px;height:135px;background:linear-gradient(90deg,#f6d6a4 0 1px,#ecb05c 1px,#f2bc6c 11px,#d08a20 12px,#b87410 14px)"></div>
<div class="b" style="left:1144px;top:570px;width:11px;height:1px;background:#f6d4a0"></div>
<div class="b" style="left:1157px;top:571px;width:1px;height:134px;background:#fbe4c8"></div>
<div class="b" style="left:1158px;top:661px;width:14px;height:44px;background:linear-gradient(90deg,#ff7070 0 1px,#ff0000 1px,#ff1010 11px,#c00000 12px,#a00000 14px)"></div>
<div class="b" style="left:1159px;top:661px;width:11px;height:1px;background:#ff6868"></div>
<div class="b" style="left:1172px;top:662px;width:1px;height:43px;background:#ffd0d0"></div>
<div class="t" style="left:1064px;width:300px;text-align:center;top:710px;font-size:11px;line-height:11px;color:#000;transform:scaleX(1.02);transform-origin:50% 0;">May</div>
<div class="t" style="left:1064px;width:300px;text-align:center;top:729px;font-size:11px;line-height:11px;color:#000;transform:scaleX(0.97);transform-origin:50% 0;">2022</div>
<div class="b" style="left:1191px;top:297px;width:14px;height:408px;background:linear-gradient(90deg,#3ccf80 0 1px,#2aa862 1px,#2eb06a 11px,#167a42 12px,#0c5a2c 14px)"></div>
<div class="b" style="left:1192px;top:297px;width:11px;height:1px;background:#5ad890"></div>
<div class="b" style="left:1205px;top:298px;width:1px;height:407px;background:#c0ecd4"></div>
<div class="b" style="left:1206px;top:570px;width:14px;height:135px;background:linear-gradient(90deg,#f6d6a4 0 1px,#ecb05c 1px,#f2bc6c 11px,#d08a20 12px,#b87410 14px)"></div>
<div class="b" style="left:1207px;top:570px;width:11px;height:1px;background:#f6d4a0"></div>
<div class="b" style="left:1220px;top:571px;width:1px;height:134px;background:#fbe4c8"></div>
<div class="b" style="left:1221px;top:661px;width:14px;height:44px;background:linear-gradient(90deg,#ff7070 0 1px,#ff0000 1px,#ff1010 11px,#c00000 12px,#a00000 14px)"></div>
<div class="b" style="left:1222px;top:661px;width:11px;height:1px;background:#ff6868"></div>
<div class="b" style="left:1235px;top:662px;width:1px;height:43px;background:#ffd0d0"></div>
<div class="b" style="left:551px;top:766px;width:717px;height:32px;background:#fff"></div>
<div class="b" style="left:551px;top:766px;width:47px;height:1px;background:#000"></div>
<div class="b" style="left:598px;top:766px;width:158px;height:27px;background:#f0f0f0;border-left:1px solid #000;border-right:1px solid #000;border-bottom:1px solid #000"></div>
<div class="t" style="left:525px;width:300px;text-align:center;top:774px;font-size:11px;line-height:11px;color:#000;">Risk Trend</div>
<div class="b" style="left:756px;top:766px;width:512px;height:1px;background:#000"></div>
<div class="b" style="left:759px;top:767px;width:159px;height:21px;background:#e0e0e0;border:1px solid #000;border-top:none"></div>
<div class="t" style="left:687px;width:300px;text-align:center;top:772px;font-size:11px;line-height:11px;color:#000;">Total Risks</div>
<div class="b" style="left:551px;top:798px;width:717px;height:1px;background:#e8e8e8"></div>
<div class="t " style="left:5px;top:806px;font-size:11px;line-height:11px;color:#000;">Ready</div>
<div class="t " style="left:862px;top:806px;font-size:11px;line-height:11px;color:#000;">Risk Trend</div>
<div class="t " style="left:1007px;top:806px;font-size:11px;line-height:11px;color:#000;transform:scaleX(0.982);transform-origin:0 0;">CAP&nbsp;&nbsp;NUM&nbsp;&nbsp;SCRL&nbsp;&nbsp;Wed, May 04,2022&nbsp;&nbsp;4:59:10 PM</div>
<svg class="b" style="left:1258px;top:807px" width="13" height="13" viewBox="0 0 13 13"><g fill="#c8c8c8"><rect x="10" y="2" width="2" height="2"/><rect x="6" y="6" width="2" height="2"/><rect x="10" y="6" width="2" height="2"/><rect x="2" y="10" width="2" height="2"/><rect x="6" y="10" width="2" height="2"/><rect x="10" y="10" width="2" height="2"/></g><g fill="#606060"><rect x="9" y="1" width="2" height="2"/><rect x="5" y="5" width="2" height="2"/><rect x="9" y="5" width="2" height="2"/><rect x="1" y="9" width="2" height="2"/><rect x="5" y="9" width="2" height="2"/><rect x="9" y="9" width="2" height="2"/></g></svg>
<div class="b" style="left:1270px;top:51px;width:1px;height:769px;background:#fff"></div>
<div class="b" style="left:1270px;top:0px;width:1px;height:28px;background:#fff"></div>
<div class="b" style="left:1271px;top:0px;width:1px;height:820px;background:#a8a8a8"></div>
<div class="b" style="left:1271px;top:0px;width:1px;height:26px;background:#5a7aa8"></div>
</body></html>
